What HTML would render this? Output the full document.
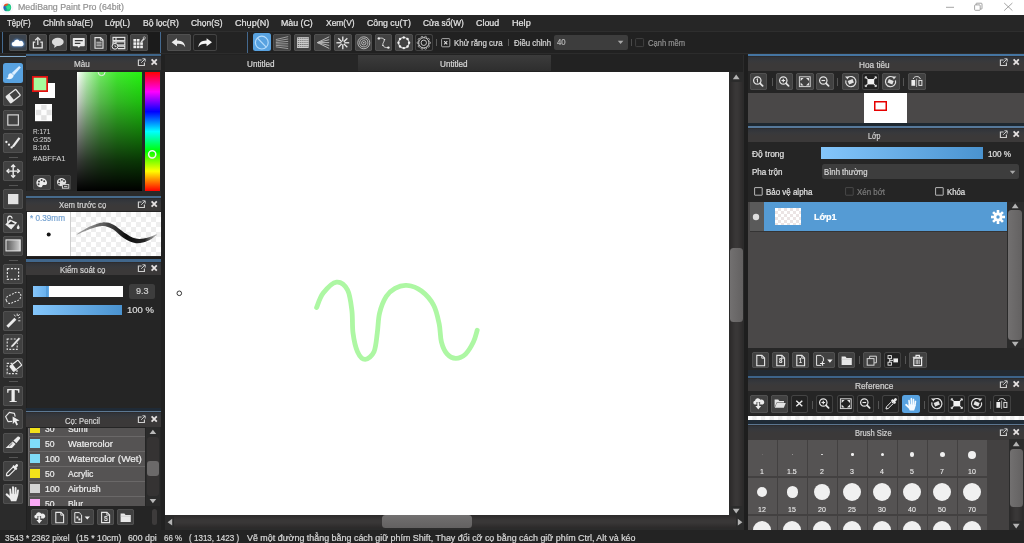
<!DOCTYPE html>
<html lang="vi"><head><meta charset="utf-8"><title>MediBang Paint Pro (64bit)</title>
<style>
html,body{margin:0;padding:0}
body{width:1024px;height:543px;overflow:hidden;background:#2b2b2b;position:relative;font-family:"Liberation Sans", sans-serif;}
div,span,svg{position:absolute;}
.t{white-space:nowrap;transform-origin:0 0;-webkit-text-stroke:0.22px currentColor;}
</style></head>
<body>
<div style="left:0px;top:0px;width:1024px;height:15px;background:#ffffff;"></div>
<svg style="left:1px;top:0.5px;" width="13" height="13" viewBox="0 0 13 13"><defs><filter id="lb" x="-20%" y="-20%" width="140%" height="140%"><feGaussianBlur stdDeviation="0.45"/></filter><clipPath id="lc"><circle cx="6.3" cy="6.4" r="3.9"/></clipPath></defs><circle cx="6.3" cy="6.4" r="5.6" fill="none" stroke="#f3e6f6" stroke-width="0.8" opacity="0.8"/><g clip-path="url(#lc)"><g filter="url(#lb)"><rect x="1" y="1" width="11" height="11" fill="#22c486"/><path d="M1 6L6 6.5L5 12H1z" fill="#1a8fa0"/><path d="M1 3.5L4.6 4.4L4.4 8L1 8z" fill="#2b5cc4"/><path d="M2 1H8L6.6 4.2L3.6 5.2L2 4z" fill="#e4542c"/><circle cx="7.4" cy="6.6" r="2" fill="#2be090"/></g></g></svg>
<span class="t" style="transform:scaleX(0.9809);left:18.00px;top:2.98px;font-size:9px;line-height:9px;color:#929292;">MediBang Paint Pro (64bit)</span>
<svg style="left:940px;top:0px;" width="84" height="15" viewBox="0 0 84 15"><g stroke="#868686" stroke-width="0.75" fill="none"><path d="M6 7.3H14"/><rect x="34.6" y="4.9" width="5.6" height="5.4" rx="0.8"/><path d="M36.1 4.9V3.8a0.6 0.6 0 0 1 .6-.6H41.2a.8 .8 0 0 1 .8 .8V8.4a.6 .6 0 0 1-.6 .6H40.2"/><path d="M64.2 3L72.4 10.6M72.4 3L64.2 10.6"/></g></svg>
<div style="left:0px;top:15px;width:1024px;height:16.4px;background:#262626;"></div>
<span class="t" style="transform:scaleX(0.9115);left:7.00px;top:19.12px;font-size:8.6px;line-height:8.6px;color:#e4e4e4;">Tệp(F)</span>
<span class="t" style="transform:scaleX(0.9777);left:43.00px;top:19.12px;font-size:8.6px;line-height:8.6px;color:#e4e4e4;">Chỉnh sửa(E)</span>
<span class="t" style="transform:scaleX(0.9726);left:105.00px;top:19.12px;font-size:8.6px;line-height:8.6px;color:#e4e4e4;">Lớp(L)</span>
<span class="t" style="transform:scaleX(0.9992);left:142.50px;top:19.12px;font-size:8.6px;line-height:8.6px;color:#e4e4e4;">Bộ lọc(R)</span>
<span class="t" style="transform:scaleX(0.9844);left:190.50px;top:19.12px;font-size:8.6px;line-height:8.6px;color:#e4e4e4;">Chọn(S)</span>
<span class="t" style="transform:scaleX(1.0559);left:234.50px;top:19.12px;font-size:8.6px;line-height:8.6px;color:#e4e4e4;">Chụp(N)</span>
<span class="t" style="transform:scaleX(1.0243);left:281.20px;top:19.12px;font-size:8.6px;line-height:8.6px;color:#e4e4e4;">Màu (C)</span>
<span class="t" style="transform:scaleX(0.9814);left:325.70px;top:19.12px;font-size:8.6px;line-height:8.6px;color:#e4e4e4;">Xem(V)</span>
<span class="t" style="transform:scaleX(1.0190);left:366.70px;top:19.12px;font-size:8.6px;line-height:8.6px;color:#e4e4e4;">Công cụ(T)</span>
<span class="t" style="transform:scaleX(0.9703);left:423.00px;top:19.12px;font-size:8.6px;line-height:8.6px;color:#e4e4e4;">Cửa sổ(W)</span>
<span class="t" style="transform:scaleX(1.0325);left:476.20px;top:19.12px;font-size:8.6px;line-height:8.6px;color:#e4e4e4;">Cloud</span>
<span class="t" style="transform:scaleX(1.0572);left:511.90px;top:19.12px;font-size:8.6px;line-height:8.6px;color:#e4e4e4;">Help</span>
<div style="left:0px;top:31.2px;width:1024px;height:22.4px;background:#212121;"></div>
<div style="left:0px;top:31.4px;width:160px;height:22px;background:#1b1b1b;"></div>
<div style="left:160px;top:31.4px;width:86.5px;height:22px;background:#232323;"></div>
<div style="left:0px;top:31.2px;width:1024px;height:0.8px;background:#2e2e2e;"></div>
<div style="left:0px;top:53.2px;width:1024px;height:0.8px;background:#2c2c2c;"></div>
<div style="left:0px;top:54px;width:1024px;height:1.2px;background:#222;"></div>
<div style="left:2px;top:32px;width:1.4px;height:20.6px;background:#44698f;"></div>
<div style="left:160px;top:32px;width:1.4px;height:20.6px;background:#44698f;"></div>
<div style="left:246.5px;top:32px;width:1.4px;height:20.6px;background:#44698f;"></div>
<div style="left:9px;top:33.5px;width:17.6px;height:17.6px;background:#3c444e;border-radius:2.5px;box-shadow:inset 0 0 0 0.7px #565656"></div>
<svg style="left:9px;top:33.5px;" width="17.6" height="17.6" viewBox="0 0 17.6 17.6"><defs><filter id="gl" x="-30%" y="-30%" width="160%" height="160%"><feGaussianBlur stdDeviation="1.1"/></filter></defs><path d="M4.5 12.6a2.3 2.3 0 0 1 .2-4.6a3.2 3.2 0 0 1 6-1a2.9 2.9 0 0 1 2.6 5.6z" fill="#5b9df0" filter="url(#gl)"/><path d="M4.7 12.3a2.1 2.1 0 0 1 .3-4.2a3 3 0 0 1 5.6-.9a2.6 2.6 0 0 1 2.2 5.1z" fill="#ffffff"/></svg>
<div style="left:29.2px;top:33.5px;width:17.6px;height:17.6px;background:#424242;border-radius:2.5px;box-shadow:inset 0 0 0 0.7px #565656"></div>
<svg style="left:29.2px;top:33.5px;" width="17.6" height="17.6" viewBox="0 0 17.6 17.6"><g fill="none" stroke="#e6e6e6" stroke-width="1.3"><path d="M6.3 8.2H4.4V13.8H13.2V8.2H11.3"/><path d="M8.8 11V4.2"/><path d="M6.2 6.3L8.8 3.6L11.4 6.3" stroke-linejoin="miter"/></g></svg>
<div style="left:49.4px;top:33.5px;width:17.6px;height:17.6px;background:#424242;border-radius:2.5px;box-shadow:inset 0 0 0 0.7px #565656"></div>
<svg style="left:49.4px;top:33.5px;" width="17.6" height="17.6" viewBox="0 0 17.6 17.6"><ellipse cx="8.8" cy="7.9" rx="5.9" ry="4.2" fill="#dcdcdc"/><path d="M5.6 10.5L5.2 13.9L8.6 11.6z" fill="#dcdcdc"/></svg>
<div style="left:69.6px;top:33.5px;width:17.6px;height:17.6px;background:#424242;border-radius:2.5px;box-shadow:inset 0 0 0 0.7px #565656"></div>
<svg style="left:69.6px;top:33.5px;" width="17.6" height="17.6" viewBox="0 0 17.6 17.6"><path d="M3.6 4H14a0.8 .8 0 0 1 .8 .8V11.4a.8 .8 0 0 1-.8 .8H10.2L8.8 13.8L7.4 12.2H3.6a.8 .8 0 0 1-.8-.8V4.8a.8 .8 0 0 1 .8-.8z" fill="#ececec"/><path d="M4.8 6.7H12.8M4.8 9.3H10.4" stroke="#3a3a3a" stroke-width="1.2"/></svg>
<div style="left:89.8px;top:33.5px;width:17.6px;height:17.6px;background:#424242;border-radius:2.5px;box-shadow:inset 0 0 0 0.7px #565656"></div>
<svg style="left:89.8px;top:33.5px;" width="17.6" height="17.6" viewBox="0 0 17.6 17.6"><path d="M5 3.6H10.6L13 6V14.2H5z" fill="none" stroke="#e6e6e6" stroke-width="1.1"/><path d="M10.4 3.8V6.2H12.8" fill="none" stroke="#e6e6e6" stroke-width="0.9"/><path d="M6.4 8.2H11.6M6.4 10H11.6M6.4 11.8H11.6" stroke="#c9c9c9" stroke-width="1.1"/></svg>
<div style="left:110px;top:33.5px;width:17.6px;height:17.6px;background:#424242;border-radius:2.5px;box-shadow:inset 0 0 0 0.7px #565656"></div>
<svg style="left:110px;top:33.5px;" width="17.6" height="17.6" viewBox="0 0 17.6 17.6"><g fill="none" stroke="#e6e6e6" stroke-width="1.15"><rect x="3" y="3.4" width="11.8" height="3.2"/><rect x="3" y="7.8" width="11.8" height="3.2"/><path d="M8 12.2H14.8V14.6H8"/><path d="M6 3.4V6.6M6 7.8V9"/></g><circle cx="5" cy="12.3" r="2.9" fill="#3e3e3e" stroke="#e6e6e6" stroke-width="1"/><path d="M5 10.8V12.5H6.4" stroke="#e6e6e6" stroke-width="0.8" fill="none"/></svg>
<div style="left:130.2px;top:33.5px;width:17.6px;height:17.6px;background:#424242;border-radius:2.5px;box-shadow:inset 0 0 0 0.7px #565656"></div>
<svg style="left:130.2px;top:33.5px;" width="17.6" height="17.6" viewBox="0 0 17.6 17.6"><rect x="3.4" y="5.0" width="2.7" height="2.6" fill="#ededed"/><rect x="6.8" y="5.0" width="2.7" height="2.6" fill="#ededed"/><rect x="3.4" y="8.3" width="2.7" height="2.6" fill="#ededed"/><rect x="6.8" y="8.3" width="2.7" height="2.6" fill="#ededed"/><rect x="10.2" y="8.3" width="2.7" height="2.6" fill="#ededed"/><rect x="3.4" y="11.6" width="2.7" height="2.6" fill="#ededed"/><rect x="6.8" y="11.6" width="2.7" height="2.6" fill="#ededed"/><rect x="10.2" y="11.6" width="2.7" height="2.6" fill="#ededed"/><path d="M10.6 7.6L13.4 4.2L14.6 5.2L11.8 8.6z" fill="#d8d8d8"/><circle cx="14.3" cy="3.9" r="1.1" fill="none" stroke="#d0d0d0" stroke-width="0.7"/></svg>
<div style="left:167px;top:33.5px;width:23.6px;height:17.6px;background:#424242;border-radius:2.5px;box-shadow:inset 0 0 0 0.7px #565656"></div>
<svg style="left:167px;top:33.5px;" width="23.6" height="17.6" viewBox="0 0 23.6 17.6"><path d="M4.6 8.2L10 4.2V6.6C15 6.4 18 9.2 18.2 13.2C16.6 10.6 14 9.6 10 9.9V12.2z" fill="#ececec"/></svg>
<div style="left:193px;top:33.5px;width:23.6px;height:17.6px;background:#222;border-radius:2.5px;box-shadow:inset 0 0 0 0.9px #444"></div>
<svg style="left:193px;top:33.5px;" width="23.6" height="17.6" viewBox="0 0 23.6 17.6"><path d="M19 8.2L13.6 4.2V6.6C8.6 6.4 5.6 9.2 5.4 13.2C7 10.6 9.6 9.6 13.6 9.9V12.2z" fill="#f4f4f4"/></svg>
<div style="left:253px;top:33px;width:17.6px;height:18px;background:#58a2e0;border-radius:2.5px"></div>
<svg style="left:253px;top:33.5px;" width="17.6" height="17.6" viewBox="0 0 17.6 17.6"><g fill="none" stroke="#b4dbfb" stroke-width="1.2"><circle cx="8.8" cy="8.6" r="6.4"/><path d="M4.4 4L13.2 13.2"/></g></svg>
<div style="left:273.3px;top:33.5px;width:17.6px;height:17.6px;background:#424242;border-radius:2.5px;box-shadow:inset 0 0 0 0.7px #565656"></div>
<svg style="left:273.3px;top:33.5px;" width="17.6" height="17.6" viewBox="0 0 17.6 17.6"><g stroke="#ababab" stroke-width="0.85"><path d="M2.8 5.60L15.2 2.60" /><path d="M2.8 7.05L15.2 5.00" /><path d="M2.8 8.50L15.2 7.40" /><path d="M2.8 9.95L15.2 9.80" /><path d="M2.8 11.40L15.2 12.20" /><path d="M2.8 12.85L15.2 14.60" /></g></svg>
<div style="left:293.6px;top:33.5px;width:17.6px;height:17.6px;background:#424242;border-radius:2.5px;box-shadow:inset 0 0 0 0.7px #565656"></div>
<svg style="left:293.6px;top:33.5px;" width="17.6" height="17.6" viewBox="0 0 17.6 17.6"><g stroke="#cacaca" stroke-width="1.1"><path d="M3.70 3.2V13.9M3.2 3.70H14.6"/><path d="M5.78 3.2V13.9M3.2 5.64H14.6"/><path d="M7.86 3.2V13.9M3.2 7.58H14.6"/><path d="M9.94 3.2V13.9M3.2 9.52H14.6"/><path d="M12.02 3.2V13.9M3.2 11.46H14.6"/><path d="M14.10 3.2V13.9M3.2 13.40H14.6"/></g></svg>
<div style="left:313.9px;top:33.5px;width:17.6px;height:17.6px;background:#424242;border-radius:2.5px;box-shadow:inset 0 0 0 0.7px #565656"></div>
<svg style="left:313.9px;top:33.5px;" width="17.6" height="17.6" viewBox="0 0 17.6 17.6"><g stroke="#bdbdbd" stroke-width="0.95"><path d="M3.4 8.6L15.2 2.80"/><path d="M3.4 8.6L15.2 5.70"/><path d="M3.4 8.6L15.2 8.60"/><path d="M3.4 8.6L15.2 11.50"/><path d="M3.4 8.6L15.2 14.40"/></g></svg>
<div style="left:334.2px;top:33.5px;width:17.6px;height:17.6px;background:#424242;border-radius:2.5px;box-shadow:inset 0 0 0 0.7px #565656"></div>
<svg style="left:334.2px;top:33.5px;" width="17.6" height="17.6" viewBox="0 0 17.6 17.6"><g stroke="#ebebeb" stroke-width="1.3"><path d="M10.30 8.80L15.20 8.80"/><path d="M9.86 9.86L13.33 13.33"/><path d="M8.80 10.30L8.80 15.20"/><path d="M7.74 9.86L4.27 13.33"/><path d="M7.30 8.80L2.40 8.80"/><path d="M7.74 7.74L4.27 4.27"/><path d="M8.80 7.30L8.80 2.40"/><path d="M9.86 7.74L13.33 4.27"/></g></svg>
<div style="left:354.5px;top:33.5px;width:17.6px;height:17.6px;background:#424242;border-radius:2.5px;box-shadow:inset 0 0 0 0.7px #565656"></div>
<svg style="left:354.5px;top:33.5px;" width="17.6" height="17.6" viewBox="0 0 17.6 17.6"><g fill="none" stroke="#d2d2d2" stroke-width="0.8"><circle cx="8.8" cy="8.8" r="6"/><circle cx="8.8" cy="8.8" r="4.1"/><circle cx="8.8" cy="8.8" r="2.2"/></g><circle cx="8.8" cy="8.8" r="0.8" fill="#d2d2d2"/></svg>
<div style="left:374.8px;top:33.5px;width:17.6px;height:17.6px;background:#424242;border-radius:2.5px;box-shadow:inset 0 0 0 0.7px #565656"></div>
<svg style="left:374.8px;top:33.5px;" width="17.6" height="17.6" viewBox="0 0 17.6 17.6"><path d="M3.8 4.4C8 3.4 10.6 5 8.6 8.2C6.6 11.4 8.6 14 13.4 13.6" fill="none" stroke="#d4d4d4" stroke-width="1"/><g fill="#f0f0f0"><circle cx="3.8" cy="4.4" r="1.2"/><circle cx="13.4" cy="13.6" r="1.2"/><circle cx="9.6" cy="5.6" r="0.7"/><circle cx="7.9" cy="11.4" r="0.7"/></g></svg>
<div style="left:395.1px;top:33.5px;width:17.6px;height:17.6px;background:#424242;border-radius:2.5px;box-shadow:inset 0 0 0 0.7px #565656"></div>
<svg style="left:395.1px;top:33.5px;" width="17.6" height="17.6" viewBox="0 0 17.6 17.6"><circle cx="8.8" cy="8.8" r="5.3" fill="none" stroke="#dadada" stroke-width="1.1"/><circle cx="14.10" cy="8.80" r="1.2" fill="#f2f2f2"/><circle cx="12.55" cy="12.55" r="1.2" fill="#f2f2f2"/><circle cx="8.80" cy="14.10" r="1.2" fill="#f2f2f2"/><circle cx="5.05" cy="12.55" r="1.2" fill="#f2f2f2"/><circle cx="3.50" cy="8.80" r="1.2" fill="#f2f2f2"/><circle cx="5.05" cy="5.05" r="1.2" fill="#f2f2f2"/><circle cx="8.80" cy="3.50" r="1.2" fill="#f2f2f2"/><circle cx="12.55" cy="5.05" r="1.2" fill="#f2f2f2"/></svg>
<div style="left:415.4px;top:33.5px;width:17.6px;height:17.6px;background:#222;border-radius:2.5px;box-shadow:inset 0 0 0 0.9px #444"></div>
<svg style="left:415.4px;top:33.5px;" width="17.6" height="17.6" viewBox="0 0 17.6 17.6"><circle cx="14.40" cy="8.80" r="1.1" fill="none" stroke="#cfcfcf" stroke-width="0.7"/><circle cx="13.33" cy="12.09" r="1.1" fill="none" stroke="#cfcfcf" stroke-width="0.7"/><circle cx="10.53" cy="14.13" r="1.1" fill="none" stroke="#cfcfcf" stroke-width="0.7"/><circle cx="7.07" cy="14.13" r="1.1" fill="none" stroke="#cfcfcf" stroke-width="0.7"/><circle cx="4.27" cy="12.09" r="1.1" fill="none" stroke="#cfcfcf" stroke-width="0.7"/><circle cx="3.20" cy="8.80" r="1.1" fill="none" stroke="#cfcfcf" stroke-width="0.7"/><circle cx="4.27" cy="5.51" r="1.1" fill="none" stroke="#cfcfcf" stroke-width="0.7"/><circle cx="7.07" cy="3.47" r="1.1" fill="none" stroke="#cfcfcf" stroke-width="0.7"/><circle cx="10.53" cy="3.47" r="1.1" fill="none" stroke="#cfcfcf" stroke-width="0.7"/><circle cx="13.33" cy="5.51" r="1.1" fill="none" stroke="#cfcfcf" stroke-width="0.7"/><circle cx="8.8" cy="8.8" r="5.1" fill="#222" stroke="#d6d6d6" stroke-width="0.9"/><circle cx="8.8" cy="8.8" r="2.7" fill="none" stroke="#d6d6d6" stroke-width="0.9"/></svg>
<div style="left:436px;top:38.5px;width:0.8px;height:7px;background:#5a5a5a;"></div>
<svg style="left:441px;top:37.7px;" width="10" height="10" viewBox="0 0 10 10"><rect x="0.6" y="0.6" width="8.2" height="8.2" rx="0.8" fill="none" stroke="#bdbdbd" stroke-width="0.85"/><path d="M3.1 3.1L6.3 6.3M6.3 3.1L3.1 6.3" stroke="#dcdcdc" stroke-width="1.1"/></svg>
<span class="t" style="transform:scaleX(0.9175);left:453.80px;top:38.92px;font-size:8.6px;line-height:8.6px;color:#d6d6d6;">Khử răng cưa</span>
<div style="left:508px;top:38.5px;width:0.8px;height:7px;background:#5a5a5a;"></div>
<span class="t" style="transform:scaleX(0.9136);left:513.50px;top:38.92px;font-size:8.6px;line-height:8.6px;color:#d6d6d6;">Điều chỉnh</span>
<div style="left:554px;top:35px;width:73.5px;height:14.5px;background:#3d3d3d;border-radius:2px"></div>
<span class="t" style="transform:scaleX(0.9441);left:556.50px;top:38.96px;font-size:8.2px;line-height:8.2px;color:#b8b8b8;">40</span>
<svg style="left:617px;top:40px;" width="8" height="5" viewBox="0 0 8 5"><path d="M0.8 0.8H6.4L3.6 4z" fill="#a8a8a8"/></svg>
<div style="left:630.5px;top:38.5px;width:0.8px;height:7px;background:#4a4a4a;"></div>
<svg style="left:634.5px;top:37.5px;" width="10" height="10" viewBox="0 0 10 10"><rect x="0.6" y="0.6" width="8" height="8" rx="0.8" fill="none" stroke="#424242" stroke-width="1"/></svg>
<span class="t" style="transform:scaleX(0.8803);left:647.80px;top:38.92px;font-size:8.6px;line-height:8.6px;color:#8e8e8e;">Cạnh mềm</span>
<div style="left:0px;top:55px;width:26px;height:475px;background:#2b2b2b;"></div>
<div style="left:0px;top:56px;width:25.5px;height:1px;background:#7fa6c8;"></div>
<div style="left:3px;top:62.7px;width:20.4px;height:20.2px;background:#58a2e0;border-radius:2.5px"></div>
<svg style="left:3px;top:62.7px;" width="20.4" height="20.2" viewBox="0 0 20.4 20.2"><path d="M8.8 10L16.2 3L17.8 4.6L11 12.2z" fill="#dbeeff"/><path d="M8.6 10.4C6.2 9.8 5 11.8 5.2 13.4C5.3 14.6 4 15.2 3 14.8C4.4 17 9.6 17 10.8 12.4z" fill="#eaf5ff"/></svg>
<div style="left:3px;top:86.2px;width:20.4px;height:20.2px;background:#414141;border-radius:2.5px;box-shadow:inset 0 0 0 0.7px #565656"></div>
<svg style="left:3px;top:86.2px;" width="20.4" height="20.2" viewBox="0 0 20.4 20.2"><g transform="rotate(-38 10.2 10.1)"><rect x="4" y="6.2" width="12.4" height="7.8" rx="0.8" fill="none" stroke="#e8e8e8" stroke-width="1.3"/><rect x="4" y="6.2" width="4.4" height="7.8" fill="#e8e8e8"/></g></svg>
<div style="left:3px;top:109.6px;width:20.4px;height:20.2px;background:#414141;border-radius:2.5px;box-shadow:inset 0 0 0 0.7px #565656"></div>
<svg style="left:3px;top:109.6px;" width="20.4" height="20.2" viewBox="0 0 20.4 20.2"><rect x="4.8" y="4.9" width="10.6" height="10.2" fill="none" stroke="#d6d6d6" stroke-width="1.2"/></svg>
<div style="left:3px;top:133.1px;width:20.4px;height:20.2px;background:#414141;border-radius:2.5px;box-shadow:inset 0 0 0 0.7px #565656"></div>
<svg style="left:3px;top:133.1px;" width="20.4" height="20.2" viewBox="0 0 20.4 20.2"><g fill="#ececec"><circle cx="3.4" cy="9" r="1.15"/><circle cx="6" cy="11.7" r="1.15"/><circle cx="8.6" cy="14.4" r="1.15"/></g><path d="M9.4 12.4L15.6 4.2L17.4 5.6L11.2 13.8L9 14.6z" fill="#ececec"/></svg>
<div style="left:3px;top:161.0px;width:20.4px;height:20.2px;background:#414141;border-radius:2.5px;box-shadow:inset 0 0 0 0.7px #565656"></div>
<svg style="left:3px;top:161.0px;" width="20.4" height="20.2" viewBox="0 0 20.4 20.2"><g stroke="#ececec" stroke-width="1.4" fill="none"><path d="M10.2 4.2V16M4.2 10.1H16.2"/><path d="M8.2 6L10.2 3.9L12.2 6M8.2 14.2L10.2 16.3L12.2 14.2M6.1 8.1L4 10.1L6.1 12.1M14.3 8.1L16.4 10.1L14.3 12.1"/></g></svg>
<div style="left:3px;top:189.2px;width:20.4px;height:20.2px;background:#414141;border-radius:2.5px;box-shadow:inset 0 0 0 0.7px #565656"></div>
<svg style="left:3px;top:189.2px;" width="20.4" height="20.2" viewBox="0 0 20.4 20.2"><rect x="5" y="5" width="10.4" height="10.2" fill="#e2e2e2"/></svg>
<div style="left:3px;top:212.7px;width:20.4px;height:20.2px;background:#414141;border-radius:2.5px;box-shadow:inset 0 0 0 0.7px #565656"></div>
<svg style="left:3px;top:212.7px;" width="20.4" height="20.2" viewBox="0 0 20.4 20.2"><path d="M6.9 6.6L14.1 9.6L8.2 16.4L2.3 11.6z" fill="#ececec"/><path d="M5 11.3L8.1 8.2L12.4 11.3z" fill="#333"/><path d="M4.7 9.6V6C4.6 2.4 8.6 2 9.2 5.6" fill="none" stroke="#ececec" stroke-width="1.1"/><path d="M15.1 11.2C16.6 13.4 16.9 14.6 16.4 15.5C15.8 16.5 14 16.3 13.8 15.1C13.7 14.1 14.7 12.8 15.1 11.2z" fill="#ececec"/></svg>
<div style="left:3px;top:236.1px;width:20.4px;height:20.2px;background:#414141;border-radius:2.5px;box-shadow:inset 0 0 0 0.7px #565656"></div>
<svg style="left:3px;top:236.1px;" width="20.4" height="20.2" viewBox="0 0 20.4 20.2"><defs><linearGradient id="gg" x1="0" x2="1"><stop offset="0" stop-color="#555"/><stop offset="1" stop-color="#cfcfcf"/></linearGradient></defs><rect x="3" y="3.9" width="14.2" height="11" fill="url(#gg)" stroke="#e4e4e4" stroke-width="1.1"/></svg>
<div style="left:3px;top:264.2px;width:20.4px;height:20.2px;background:#414141;border-radius:2.5px;box-shadow:inset 0 0 0 0.7px #565656"></div>
<svg style="left:3px;top:264.2px;" width="20.4" height="20.2" viewBox="0 0 20.4 20.2"><rect x="4.4" y="4.6" width="11.2" height="10.8" fill="none" stroke="#e0e0e0" stroke-width="1.2" stroke-dasharray="2 1.5"/></svg>
<div style="left:3px;top:287.5px;width:20.4px;height:20.2px;background:#414141;border-radius:2.5px;box-shadow:inset 0 0 0 0.7px #565656"></div>
<svg style="left:3px;top:287.5px;" width="20.4" height="20.2" viewBox="0 0 20.4 20.2"><path d="M3.4 12.6C2 9.6 4.8 7.8 7.6 7C10.4 6.2 11.6 3.8 14.8 4.2C18.4 4.8 18.8 9 16.2 11.6C13.6 14 11.4 13 9.4 14.6C7.4 16.2 4.6 15.6 3.4 12.6z" fill="none" stroke="#dcdcdc" stroke-width="1.1" stroke-dasharray="1.9 1.3"/></svg>
<div style="left:3px;top:310.9px;width:20.4px;height:20.2px;background:#414141;border-radius:2.5px;box-shadow:inset 0 0 0 0.7px #565656"></div>
<svg style="left:3px;top:310.9px;" width="20.4" height="20.2" viewBox="0 0 20.4 20.2"><path d="M3.4 14.8L11.4 6.8L13.4 8.8L5.4 16.8z" fill="#ececec"/><g stroke="#ececec" stroke-width="0.9"><path d="M14.2 2.6V5M17.4 6.2L15.4 7M17.4 9.8H15.2M11.2 3.6L12.4 5.4M16.6 3.2L15.2 5"/></g></svg>
<div style="left:3px;top:334.3px;width:20.4px;height:20.2px;background:#414141;border-radius:2.5px;box-shadow:inset 0 0 0 0.7px #565656"></div>
<svg style="left:3px;top:334.3px;" width="20.4" height="20.2" viewBox="0 0 20.4 20.2"><rect x="4.2" y="5" width="10" height="10.4" fill="none" stroke="#e0e0e0" stroke-width="1.1" stroke-dasharray="1.9 1.4"/><path d="M8.2 11.4L15.8 3.2L17.6 4.8L10 13L7.6 13.8z" fill="#ececec" stroke="#3d3d3d" stroke-width="0.7"/></svg>
<div style="left:3px;top:357.7px;width:20.4px;height:20.2px;background:#414141;border-radius:2.5px;box-shadow:inset 0 0 0 0.7px #565656"></div>
<svg style="left:3px;top:357.7px;" width="20.4" height="20.2" viewBox="0 0 20.4 20.2"><rect x="4.2" y="5.4" width="9.8" height="10.2" fill="none" stroke="#e0e0e0" stroke-width="1.1" stroke-dasharray="1.9 1.4"/><g transform="rotate(-38 12.8 7.8)"><rect x="7.6" y="4.6" width="10.4" height="6.4" rx="0.7" fill="#3d3d3d" stroke="#ececec" stroke-width="1.1"/><rect x="7.6" y="4.6" width="3.6" height="6.4" fill="#ececec"/></g></svg>
<div style="left:3px;top:385.8px;width:20.4px;height:20.2px;background:#414141;border-radius:2.5px;box-shadow:inset 0 0 0 0.7px #565656"></div>
<span class="t" style="transform:scaleX(1.0320);left:7.00px;top:386.76px;font-size:18px;line-height:18px;color:#ececec;font-weight:bold;font-family:'Liberation Serif',serif;">T</span>
<div style="left:3px;top:409.2px;width:20.4px;height:20.2px;background:#414141;border-radius:2.5px;box-shadow:inset 0 0 0 0.7px #565656"></div>
<svg style="left:3px;top:409.2px;" width="20.4" height="20.2" viewBox="0 0 20.4 20.2"><path d="M9.2 12.4L5 12.6L2.6 7.6L6.4 3.4L11.4 4.4L12.2 7.6" fill="none" stroke="#e4e4e4" stroke-width="1.2" stroke-linejoin="round"/><path d="M9.6 7.6L16.6 11.6L13.4 12.2L15 15.6L13.4 16.4L11.8 13L9.8 15z" fill="#ececec"/></svg>
<div style="left:3px;top:432.6px;width:20.4px;height:20.2px;background:#414141;border-radius:2.5px;box-shadow:inset 0 0 0 0.7px #565656"></div>
<svg style="left:3px;top:432.6px;" width="20.4" height="20.2" viewBox="0 0 20.4 20.2"><path d="M2.6 15L9.6 8.4L12.6 11L9 15z" fill="#ececec"/><path d="M10.4 7.6L14.8 3.6C15.8 2.8 17.8 4.6 17 5.8L13.4 10.2z" fill="#ececec"/><path d="M6 13.4L9.4 10.2" stroke="#3d3d3d" stroke-width="0.8"/></svg>
<div style="left:3px;top:461.0px;width:20.4px;height:20.2px;background:#414141;border-radius:2.5px;box-shadow:inset 0 0 0 0.7px #565656"></div>
<svg style="left:3px;top:461.0px;" width="20.4" height="20.2" viewBox="0 0 20.4 20.2"><path d="M3.4 14.4L3.9 12.2L10.2 5.9L12.4 8.1L6.1 14.4L3.9 14.9z" fill="#3c3c3c" stroke="#ececec" stroke-width="1.2" stroke-linejoin="round"/><path d="M9.4 5.2L10.6 4L11.6 5L13 3.4C14 2.4 15.8 4 14.8 5.2L13.4 6.8L14.4 7.8L13.2 9z" fill="#ececec"/></svg>
<div style="left:3px;top:484.3px;width:20.4px;height:20.2px;background:#414141;border-radius:2.5px;box-shadow:inset 0 0 0 0.7px #565656"></div>
<svg style="left:3px;top:484.3px;" width="20.4" height="20.2" viewBox="0 0 20.4 20.2"><g stroke="#ececec" stroke-linecap="round" fill="none"><path d="M7.2 5.4L7.8 11M10 3.1L10.2 10.5M12.6 4L12.4 10.5M15 6.4L14.3 11.5" stroke-width="1.9"/><path d="M3.7 10.4L7.6 14" stroke-width="2.1"/></g><path d="M6.7 9.6L15 10.6C15 13.6 13.9 15.6 13.3 17.3H8.1C7 15.6 6.5 13.4 6.7 9.6z" fill="#ececec"/></svg>
<div style="left:9px;top:156.6px;width:8.5px;height:1px;background:#555;"></div>
<div style="left:9px;top:184.8px;width:8.5px;height:1px;background:#555;"></div>
<div style="left:9px;top:259.6px;width:8.5px;height:1px;background:#555;"></div>
<div style="left:9px;top:381.4px;width:8.5px;height:1px;background:#555;"></div>
<div style="left:9px;top:456.5px;width:8.5px;height:1px;background:#555;"></div>
<div style="left:26px;top:55px;width:135px;height:475px;background:#252525;"></div>
<div style="left:26px;top:53.8px;width:135px;height:2.0px;background:#3f6589;"></div>
<div style="left:26px;top:55.8px;width:135px;height:13.900000000000006px;background:#3b3939;background:linear-gradient(#2c2826 0,#31343a 1.4px,#38393c 5px,#3b3939 8px)"></div>
<span class="t" style="transform:scaleX(0.9450);left:74.00px;top:60.02px;font-size:8.6px;line-height:8.6px;color:#d2d2d2;">Màu</span>
<svg style="left:137.4px;top:58.099999999999994px;" width="22" height="9" viewBox="0 0 22 9"><g fill="none" stroke="#cfcfcf"><path d="M4.6 2H1.4V7.5H7.4V4.6" stroke-width="1.15"/><path d="M4.2 4.8L8 1M5.4 0.8H8.2V3.6" stroke-width="0.95"/><path d="M14.6 1.4L19.8 6.6M19.8 1.4L14.6 6.6" stroke="#e6e2e2" stroke-width="1.8"/></g></svg>
<div style="left:27px;top:70.2px;width:134px;height:124.5px;background:#252525;"></div>
<div style="left:39px;top:82.9px;width:15.5px;height:15.5px;background:#ffffff;"></div>
<div style="left:32px;top:76px;width:16px;height:16px;background:#a6fb9c;box-shadow:inset 0 0 0 1.7px #e41010"></div>
<svg style="left:34.8px;top:104.4px;" width="17.6" height="17.2" viewBox="0 0 17.6 17.2"><rect width="17.6" height="17.2" fill="#fdfdfd"/><g fill="#e2e2e2"><rect x="6.2" y="1" width="5.4" height="4.8"/><rect x="1" y="5.8" width="5.2" height="5.4"/><rect x="11.6" y="5.8" width="5" height="5.4"/><rect x="6.2" y="11.2" width="5.4" height="5"/></g></svg>
<span class="t" style="transform:scaleX(0.9016);left:32.50px;top:127.51px;font-size:7.2px;line-height:7.2px;color:#d0d0d0;-webkit-text-stroke:0.08px currentColor;">R:171</span>
<span class="t" style="transform:scaleX(0.9187);left:32.50px;top:135.91px;font-size:7.2px;line-height:7.2px;color:#d0d0d0;-webkit-text-stroke:0.08px currentColor;">G:255</span>
<span class="t" style="transform:scaleX(0.9204);left:32.50px;top:144.31px;font-size:7.2px;line-height:7.2px;color:#d0d0d0;-webkit-text-stroke:0.08px currentColor;">B:161</span>
<span class="t" style="transform:scaleX(0.9969);left:32.50px;top:155.27px;font-size:7.6px;line-height:7.6px;color:#d0d0d0;-webkit-text-stroke:0.08px currentColor;">#ABFFA1</span>
<div style="left:33.4px;top:174.6px;width:17.6px;height:15.2px;background:#414141;border-radius:2.5px;box-shadow:inset 0 0 0 0.7px #565656"></div>
<svg style="left:33.4px;top:174.6px;" width="17.6" height="15.2" viewBox="0 0 17.6 15.2"><path d="M8.8 3C5.2 3 3.2 5.6 3.4 8.2C3.6 11 6.2 12.6 8.2 12.2C9.4 12 9 10.8 9.8 10.2C10.8 9.6 12.4 10.6 13.6 9.4C15.2 7.6 12.8 3 8.8 3z" fill="#ececec"/><g fill="#3d3d3d"><circle cx="6" cy="6.4" r="1"/><circle cx="8.6" cy="5" r="1"/><circle cx="11.2" cy="6.2" r="1"/><circle cx="5.6" cy="9.2" r="1"/></g></svg>
<div style="left:54.2px;top:174.6px;width:17.3px;height:15.2px;background:#363636;border-radius:2.5px;box-shadow:inset 0 0 0 0.6px #484848"></div>
<svg style="left:54.2px;top:174.6px;" width="17.3" height="15.2" viewBox="0 0 17.3 15.2"><path d="M7.8 3C4.6 3 2.8 5.2 3 7.6C3.2 10 5.4 11.4 7.2 11.2C8.2 11 7.9 10 8.6 9.4C9.4 8.8 10.8 9.6 11.8 8.6C13.2 7 11.2 3 7.8 3z" fill="#e0e0e0"/><g fill="#363636"><circle cx="5.4" cy="6" r="0.9"/><circle cx="7.8" cy="4.8" r="0.9"/><circle cx="10" cy="6" r="0.9"/><circle cx="5" cy="8.6" r="0.9"/></g><rect x="8.4" y="9.6" width="6.4" height="3.6" fill="#363636" stroke="#e0e0e0" stroke-width="0.9"/><path d="M10 11.4H13.4" stroke="#e0e0e0" stroke-width="0.9"/></svg>
<div style="left:77.2px;top:72px;width:64.8px;height:119px;background:#2aff12;background:linear-gradient(to bottom,rgba(0,0,0,0) 0%,rgba(0,0,0,0.22) 25%,rgba(0,0,0,0.5) 50%,rgba(0,0,0,0.78) 75%,#000 100%),linear-gradient(to right,#fff 0%,#b6f4b0 15%,#6fea61 36%,#40ea2e 62%,#24f411 100%)"></div>
<svg style="left:96px;top:67px;clip-path:inset(5px 0 0 0)" width="12" height="12" viewBox="0 0 12 12"><circle cx="5.6" cy="5.2" r="3.4" fill="none" stroke="#ececec" stroke-width="1"/></svg>
<div style="left:144.5px;top:72px;width:15.7px;height:119px;background:#f00;background:linear-gradient(to bottom,#ff0000 0%,#ff00ff 16.6%,#0000ff 33.3%,#00ffff 50%,#00ff00 66.6%,#ffff00 83.3%,#ff0000 100%)"></div>
<svg style="left:146px;top:147.5px;" width="13" height="13" viewBox="0 0 13 13"><circle cx="6.2" cy="6.3" r="3.6" fill="none" stroke="#f4f4f4" stroke-width="1.5"/></svg>
<div style="left:26px;top:70px;width:0.9px;height:460px;background:#202020;"></div>
<div style="left:26px;top:191.4px;width:135px;height:4.7px;background:#2a2a2a;"></div>
<div style="left:26px;top:195.9px;width:135px;height:1.799999999999983px;background:#466a8b;"></div>
<div style="left:26px;top:197.7px;width:135px;height:13.300000000000011px;background:#3b3939;background:linear-gradient(#2c2826 0,#31343a 1.4px,#38393c 5px,#3b3939 8px)"></div>
<span class="t" style="transform:scaleX(0.8996);left:58.80px;top:201.02px;font-size:8.6px;line-height:8.6px;color:#d2d2d2;">Xem trước cọ</span>
<svg style="left:137.4px;top:199.8px;" width="22" height="9" viewBox="0 0 22 9"><g fill="none" stroke="#cfcfcf"><path d="M4.6 2H1.4V7.5H7.4V4.6" stroke-width="1.15"/><path d="M4.2 4.8L8 1M5.4 0.8H8.2V3.6" stroke-width="0.95"/><path d="M14.6 1.4L19.8 6.6M19.8 1.4L14.6 6.6" stroke="#e6e2e2" stroke-width="1.8"/></g></svg>
<div style="left:27px;top:211.6px;width:134px;height:44.6px;background:#ffffff;"></div>
<div style="left:71px;top:211.6px;width:90px;height:44.6px;background-color:#fff;background-image:linear-gradient(45deg,#eeeeee 25%,transparent 25%,transparent 75%,#eeeeee 75%),linear-gradient(45deg,#eeeeee 25%,transparent 25%,transparent 75%,#eeeeee 75%);background-size:10px 10px;background-position:0 0,5px 5px"></div>
<div style="left:70.4px;top:211.6px;width:0.7px;height:44.6px;background:#cfcfcf;"></div>
<span class="t" style="transform:scaleX(0.9765);left:30.00px;top:214.19px;font-size:8.4px;line-height:8.4px;color:#78a4d2;">* 0.39mm</span>
<svg style="left:45px;top:231px;" width="8" height="8" viewBox="0 0 8 8"><circle cx="3.7" cy="3.5" r="2" fill="#161616"/></svg>
<svg style="left:71px;top:211.6px;" width="90" height="44.6" viewBox="0 0 90 44.6"><defs><linearGradient id="bs" x1="0" x2="1" y1="0" y2="0"><stop offset="0" stop-color="#000" stop-opacity="0.3"/><stop offset="0.3" stop-color="#000" stop-opacity="0.6"/><stop offset="0.62" stop-color="#000" stop-opacity="0.95"/><stop offset="0.85" stop-color="#000" stop-opacity="0.85"/><stop offset="1" stop-color="#000" stop-opacity="0.25"/></linearGradient><filter id="bsf" x="-5%" y="-20%" width="110%" height="140%"><feGaussianBlur stdDeviation="0.35"/></filter></defs><path d="M5.8 22.1C8.0 20.9 14.7 16.6 19.0 14.6C23.3 12.6 27.8 10.7 31.6 10.4C35.4 10.1 38.4 10.9 42.0 12.6C45.6 14.3 49.2 18.1 53.0 20.4C56.8 22.7 61.0 25.7 65.0 26.6C69.0 27.5 73.6 26.4 77.0 25.6C80.4 24.8 84.2 22.5 85.6 21.9L85.6 23.2C84.2 24.1 80.4 27.4 77.0 28.7C73.6 30.0 69.0 31.6 65.0 31.2C61.0 30.8 56.8 28.5 53.0 26.2C49.2 23.9 45.6 19.2 42.0 17.2C38.4 15.1 35.4 14.0 31.6 13.9C27.8 13.8 23.3 15.4 19.0 16.9C14.7 18.4 8.0 21.7 5.8 22.7z" fill="url(#bs)" filter="url(#bsf)"/></svg>
<div style="left:26px;top:256.6px;width:135px;height:2.9999999999999547px;background:#1c1a19;"></div>
<div style="left:26px;top:259.4px;width:135px;height:2.8000000000000114px;background:#41678c;"></div>
<div style="left:26px;top:262.2px;width:135px;height:12.800000000000011px;background:#3b3939;background:linear-gradient(#2c2826 0,#31343a 1.4px,#38393c 5px,#3b3939 8px)"></div>
<span class="t" style="transform:scaleX(0.9157);left:59.50px;top:265.82px;font-size:8.6px;line-height:8.6px;color:#d2d2d2;">Kiểm soát cọ</span>
<svg style="left:137.4px;top:264.0px;" width="22" height="9" viewBox="0 0 22 9"><g fill="none" stroke="#cfcfcf"><path d="M4.6 2H1.4V7.5H7.4V4.6" stroke-width="1.15"/><path d="M4.2 4.8L8 1M5.4 0.8H8.2V3.6" stroke-width="0.95"/><path d="M14.6 1.4L19.8 6.6M19.8 1.4L14.6 6.6" stroke="#e6e2e2" stroke-width="1.8"/></g></svg>
<div style="left:33px;top:285.8px;width:90px;height:10.8px;background:#ffffff;"></div>
<div style="left:33px;top:285.8px;width:16.2px;height:10.8px;background:#74baf4;background:linear-gradient(to right,#86c6fa,#6ab2ee 80%,#4f98d6 86%,#6ab2ee)"></div>
<div style="left:128.5px;top:283.6px;width:26px;height:15.5px;background:#3d3d3d;border-radius:2.5px"></div>
<span class="t" style="transform:scaleX(0.9443);left:135.80px;top:286.27px;font-size:9.6px;line-height:9.6px;color:#cfcfcf;">9.3</span>
<div style="left:33px;top:304.5px;width:89.3px;height:10.8px;background:#5aa4e0;background:linear-gradient(to right,#84c6fb,#4a93d0)"></div>
<span class="t" style="transform:scaleX(0.9925);left:127.40px;top:304.77px;font-size:9.6px;line-height:9.6px;color:#dadada;">100 %</span>
<div style="left:26px;top:407.5px;width:135px;height:3.300000000000023px;background:#1f2a36;"></div>
<div style="left:26px;top:410.6px;width:135px;height:1.599999999999966px;background:#5c7893;"></div>
<div style="left:26px;top:412.2px;width:135px;height:14.900000000000034px;background:#3b3939;background:linear-gradient(#2c2826 0,#31343a 1.4px,#38393c 5px,#3b3939 8px)"></div>
<span class="t" style="transform:scaleX(0.8935);left:65.00px;top:416.72px;font-size:8.6px;line-height:8.6px;color:#d2d2d2;">Cọ: Pencil</span>
<svg style="left:137.4px;top:414.8px;" width="22" height="9" viewBox="0 0 22 9"><g fill="none" stroke="#cfcfcf"><path d="M4.6 2H1.4V7.5H7.4V4.6" stroke-width="1.15"/><path d="M4.2 4.8L8 1M5.4 0.8H8.2V3.6" stroke-width="0.95"/><path d="M14.6 1.4L19.8 6.6M19.8 1.4L14.6 6.6" stroke="#e6e2e2" stroke-width="1.8"/></g></svg>
<div style="left:28px;top:427.9px;width:116.5px;height:77.9px;background:#555353;"></div>
<div style="left:28px;top:427.9px;width:116.5px;height:77.9px;overflow:hidden">
<div style="left:0;top:0;width:0.8px;height:80px;background:#6f6d6d"></div>
<div style="left:0;top:8.1px;width:116.5px;height:0.9px;background:#6a6868"></div>
<div style="left:2.4px;top:-3.9px;width:9.7px;height:9px;background:#f2e21a"></div>
<span class="t" style="transform:scaleX(0.9075);left:16.70px;top:-3.54px;font-size:9.5px;line-height:9.5px;color:#ececec;">30</span>
<span class="t" style="transform:scaleX(0.9143);left:40.30px;top:-3.54px;font-size:9.5px;line-height:9.5px;color:#ececec;">Sumi</span>
<div style="left:0;top:23.1px;width:116.5px;height:0.9px;background:#6a6868"></div>
<div style="left:2.4px;top:11.1px;width:9.7px;height:9px;background:#7fdcf8"></div>
<span class="t" style="transform:scaleX(0.9075);left:16.70px;top:11.46px;font-size:9.5px;line-height:9.5px;color:#ececec;">50</span>
<span class="t" style="transform:scaleX(0.9851);left:40.30px;top:11.46px;font-size:9.5px;line-height:9.5px;color:#ececec;">Watercolor</span>
<div style="left:0;top:38.1px;width:116.5px;height:0.9px;background:#6a6868"></div>
<div style="left:2.4px;top:26.1px;width:9.7px;height:9px;background:#7fdcf8"></div>
<span class="t" style="transform:scaleX(0.9332);left:16.70px;top:26.46px;font-size:9.5px;line-height:9.5px;color:#ececec;">100</span>
<span class="t" style="transform:scaleX(1.0342);left:40.30px;top:26.46px;font-size:9.5px;line-height:9.5px;color:#ececec;">Watercolor (Wet)</span>
<div style="left:0;top:53.1px;width:116.5px;height:0.9px;background:#6a6868"></div>
<div style="left:2.4px;top:41.1px;width:9.7px;height:9px;background:#f2e21a"></div>
<span class="t" style="transform:scaleX(0.9075);left:16.70px;top:41.46px;font-size:9.5px;line-height:9.5px;color:#ececec;">50</span>
<span class="t" style="transform:scaleX(0.9076);left:40.30px;top:41.46px;font-size:9.5px;line-height:9.5px;color:#ececec;">Acrylic</span>
<div style="left:0;top:68.1px;width:116.5px;height:0.9px;background:#6a6868"></div>
<div style="left:2.4px;top:56.1px;width:9.7px;height:9px;background:#d4d4d4"></div>
<span class="t" style="transform:scaleX(0.9332);left:16.70px;top:56.46px;font-size:9.5px;line-height:9.5px;color:#ececec;">100</span>
<span class="t" style="transform:scaleX(0.9244);left:40.30px;top:56.46px;font-size:9.5px;line-height:9.5px;color:#ececec;">Airbrush</span>
<div style="left:0;top:83.1px;width:116.5px;height:0.9px;background:#6a6868"></div>
<div style="left:2.4px;top:71.1px;width:9.7px;height:9px;background:#f9a8f4"></div>
<span class="t" style="transform:scaleX(0.9075);left:16.70px;top:71.46px;font-size:9.5px;line-height:9.5px;color:#ececec;">50</span>
<span class="t" style="transform:scaleX(0.8991);left:40.30px;top:71.46px;font-size:9.5px;line-height:9.5px;color:#ececec;">Blur</span>
</div>
<div style="left:145.5px;top:427px;width:14.5px;height:79px;background:#2b2b2b;"></div>
<div style="left:146.8px;top:437px;width:12px;height:59px;background:#353333;border-radius:3px"></div>
<div style="left:146.8px;top:461px;width:12px;height:14.5px;background:#6b6969;border-radius:3px"></div>
<svg style="left:149px;top:429px;" width="8" height="6" viewBox="0 0 8 6"><path d="M0.6 5L3.9 0.8L7.2 5z" fill="#b9b9b9"/></svg>
<svg style="left:149px;top:498px;" width="8" height="6" viewBox="0 0 8 6"><path d="M0.6 1L3.9 5.2L7.2 1z" fill="#b9b9b9"/></svg>
<div style="left:30.8px;top:508.6px;width:17.1px;height:16.8px;background:#414141;border-radius:2.5px;box-shadow:inset 0 0 0 0.7px #565656"></div>
<svg style="left:30.8px;top:508.8px;" width="17.4" height="17.4" viewBox="0 0 17.4 17.4"><path d="M4.8 9.6a2 2 0 0 1 .2-3.9a2.9 2.9 0 0 1 5.4-.9a2.5 2.5 0 0 1 2.2 4.8z" fill="#ececec"/><path d="M8.3 7V12.4" stroke="#3d3d3d" stroke-width="3.6"/><path d="M4.2 10.4H12.4L8.3 15.4z" fill="#3d3d3d"/><path d="M8.3 7.2V12" stroke="#ececec" stroke-width="2"/><path d="M5.4 11H11.2L8.3 14.5z" fill="#ececec"/></svg>
<div style="left:51px;top:508.6px;width:17px;height:16.8px;background:#414141;border-radius:2.5px;box-shadow:inset 0 0 0 0.7px #565656"></div>
<svg style="left:51px;top:508.8px;" width="17.4" height="17" viewBox="0 0 17.4 17"><path d="M4.8 3.4H10L12.6 6V13.8H4.8z" fill="none" stroke="#e6e6e6" stroke-width="1.1"/><path d="M9.8 3.6V6.2H12.4" fill="none" stroke="#e6e6e6" stroke-width="0.9"/></svg>
<div style="left:71.2px;top:508.6px;width:22.6px;height:16.8px;background:#414141;border-radius:2.5px;box-shadow:inset 0 0 0 0.7px #565656"></div>
<svg style="left:71.2px;top:508.8px;" width="21.6" height="16.2" viewBox="0 0 21.6 16.2"><path d="M3.8 3.6H8.2L10.6 6V13.4H3.8z" fill="none" stroke="#e6e6e6" stroke-width="1"/><rect x="5.4" y="7.4" width="2" height="2" fill="#e6e6e6"/><rect x="7.4" y="9.4" width="2" height="2" fill="#e6e6e6"/><path d="M13.6 7.4H19L16.3 10.6z" fill="#f0f0f0"/></svg>
<div style="left:96.9px;top:508.6px;width:17.4px;height:16.8px;background:#414141;border-radius:2.5px;box-shadow:inset 0 0 0 0.7px #565656"></div>
<svg style="left:96.9px;top:508.8px;" width="17" height="16.2" viewBox="0 0 17 16.2"><path d="M4.6 3.4H10L12.6 6V13.6H4.6z" fill="none" stroke="#e6e6e6" stroke-width="1.1"/><path d="M9.8 3.6V6.2H12.4" fill="none" stroke="#e6e6e6" stroke-width="0.9"/></svg>
<span class="t" style="transform:scaleX(0.8908);left:103.50px;top:515.58px;font-size:6.4px;line-height:6.4px;color:#e6e6e6;-webkit-text-stroke:0.08px currentColor;font-weight:bold;">S</span>
<div style="left:117px;top:508.6px;width:17.1px;height:16.8px;background:#414141;border-radius:2.5px;box-shadow:inset 0 0 0 0.7px #565656"></div>
<svg style="left:117px;top:508.8px;" width="17.4" height="17" viewBox="0 0 17.4 17"><path d="M3.6 4.6H7.4L8.6 6H13.8V13H3.6z" fill="#e8e8e8"/><path d="M3.6 7.2H13.8" stroke="#bdbdbd" stroke-width="0.6"/></svg>
<div style="left:151.9px;top:509px;width:5.6px;height:16.2px;background:#3d3b3b;border-radius:2.5px"></div>
<div style="left:161px;top:55px;width:4px;height:475px;background:#212121;"></div>
<div style="left:165px;top:55px;width:582px;height:17px;background:#222222;"></div>
<div style="left:165px;top:55px;width:192.8px;height:16.2px;background:#262626;"></div>
<div style="left:358px;top:55px;width:193.2px;height:16.2px;background:#333;background:linear-gradient(#3c3c3c,#2e2e2e)"></div>
<span class="t" style="transform:scaleX(0.9471);left:247.20px;top:60.12px;font-size:8.6px;line-height:8.6px;color:#d8d8d8;">Untitled</span>
<span class="t" style="transform:scaleX(0.9471);left:439.80px;top:60.12px;font-size:8.6px;line-height:8.6px;color:#d8d8d8;">Untitled</span>
<div style="left:165px;top:72px;width:564.2px;height:442.5px;background:#ffffff;"></div>
<svg style="left:165px;top:72px;" width="564" height="442" viewBox="0 0 564 442"><path d="M151.6 235.5C152.7 233.1 154.9 225.3 158.2 221.1C161.5 216.9 167.4 210.7 171.5 210.1C175.6 209.6 179.9 213.0 182.5 217.8C185.1 222.6 186.0 231.6 186.9 238.8C187.8 246.0 187.1 254.1 188.0 260.9C188.9 267.7 190.5 275.3 192.5 279.7C194.5 284.1 197.4 287.4 200.2 287.4C202.9 287.4 207.0 284.1 209.0 279.7C211.0 275.3 211.4 267.3 212.3 260.9C213.2 254.4 213.1 247.1 214.6 241.0C216.1 234.9 218.6 228.6 221.2 224.5C223.8 220.4 226.5 218.2 230.0 216.3C233.5 214.4 237.8 212.9 242.2 213.4C246.6 213.8 252.1 215.7 256.5 219.0C260.9 222.3 265.8 227.8 268.7 233.3C271.6 238.8 272.9 245.9 274.2 252.0C275.5 258.1 275.1 264.8 276.4 269.8C277.7 274.8 279.6 279.1 282.0 281.9C284.4 284.6 287.7 286.3 290.8 286.3C293.9 286.3 297.8 284.6 300.7 281.9C303.6 279.1 306.6 273.7 308.5 269.8C310.4 265.9 311.6 260.2 312.2 258.3" fill="none" stroke="#adf7a3" stroke-width="4.8" stroke-linecap="round" stroke-linejoin="round"/><circle cx="14.3" cy="221.3" r="2.3" fill="#fff" stroke="#222" stroke-width="0.9"/></svg>
<div style="left:729.2px;top:72px;width:14px;height:457px;background:#2b2b2b;"></div>
<div style="left:730px;top:81.5px;width:12.5px;height:424px;background:#383636;background:linear-gradient(to right,#2c2a2a,#393737 40%,#393737 60%,#2c2a2a)"></div>
<div style="left:730px;top:247.5px;width:12.5px;height:74.5px;background:#6b6969;border-radius:3.5px;background:linear-gradient(to right,#727070,#636161)"></div>
<svg style="left:732px;top:73.5px;" width="9" height="6" viewBox="0 0 9 6"><path d="M0.8 5.2L4.2 0.6L7.6 5.2z" fill="#b4b4b4"/></svg>
<svg style="left:732px;top:507.5px;" width="9" height="6" viewBox="0 0 9 6"><path d="M0.8 0.8L4.2 5.4L7.6 0.8z" fill="#b4b4b4"/></svg>
<div style="left:165px;top:514.5px;width:578px;height:14.5px;background:#2b2b2b;"></div>
<div style="left:174px;top:515.3px;width:562px;height:12.8px;background:#383636;background:linear-gradient(#2c2a2a,#393737 40%,#393737 60%,#2c2a2a)"></div>
<div style="left:381.5px;top:515.3px;width:90.3px;height:12.8px;background:#6b6969;border-radius:3.5px;background:linear-gradient(#727070,#636161)"></div>
<svg style="left:166.5px;top:518px;" width="6" height="9" viewBox="0 0 6 9"><path d="M5.2 0.8L0.6 4.2L5.2 7.6z" fill="#b4b4b4"/></svg>
<svg style="left:737px;top:518px;" width="6" height="9" viewBox="0 0 6 9"><path d="M0.8 0.8L5.4 4.2L0.8 7.6z" fill="#b4b4b4"/></svg>
<div style="left:743.2px;top:55px;width:4px;height:475px;background:#2b2b2b;"></div>
<div style="left:744.4px;top:55px;width:3.4px;height:475px;background:#1e1e1e;"></div>
<div style="left:747.6px;top:55px;width:276.4px;height:475px;background:#252525;"></div>
<div style="left:747.6px;top:53.8px;width:276.4px;height:2.200000000000003px;background:#4575a2;"></div>
<div style="left:747.6px;top:56px;width:276.4px;height:14.900000000000006px;background:#3b3939;background:linear-gradient(#2c2826 0,#31343a 1.4px,#38393c 5px,#3b3939 8px)"></div>
<span class="t" style="transform:scaleX(0.9589);left:858.80px;top:60.92px;font-size:8.6px;line-height:8.6px;color:#d2d2d2;">Hoa tiêu</span>
<svg style="left:999.4px;top:58.0px;" width="22" height="9" viewBox="0 0 22 9"><g fill="none" stroke="#cfcfcf"><path d="M4.6 2H1.4V7.5H7.4V4.6" stroke-width="1.15"/><path d="M4.2 4.8L8 1M5.4 0.8H8.2V3.6" stroke-width="0.95"/><path d="M14.6 1.4L19.8 6.6M19.8 1.4L14.6 6.6" stroke="#e6e2e2" stroke-width="1.8"/></g></svg>
<div style="left:747.6px;top:70.9px;width:276.4px;height:22.5px;background:#252525;"></div>
<div style="left:750px;top:73px;width:17.4px;height:17.4px;background:#414141;border-radius:2.5px;box-shadow:inset 0 0 0 0.7px #565656"></div>
<svg style="left:750px;top:73px;" width="17.4" height="17.4" viewBox="0 0 17.4 17.4"><circle cx="7.3" cy="7.5" r="3.7" fill="none" stroke="#e4e4e4" stroke-width="1.2"/><path d="M10.1 10.4L12.6 12.8" stroke="#e4e4e4" stroke-width="1.8" stroke-linecap="round"/><path d="M6.5 6.4L7.5 5.7V9.4" fill="none" stroke="#e8e8e8" stroke-width="0.95"/></svg>
<div style="left:776px;top:73px;width:17.4px;height:17.4px;background:#414141;border-radius:2.5px;box-shadow:inset 0 0 0 0.7px #565656"></div>
<svg style="left:776px;top:73px;" width="17.4" height="17.4" viewBox="0 0 17.4 17.4"><circle cx="7.3" cy="7.5" r="3.7" fill="none" stroke="#e4e4e4" stroke-width="1.2"/><path d="M10.1 10.4L12.6 12.8" stroke="#e4e4e4" stroke-width="1.8" stroke-linecap="round"/><path d="M5.5 7.5H9.1M7.3 5.7V9.3" stroke="#e8e8e8" stroke-width="1.15"/></svg>
<div style="left:796.2px;top:73px;width:17.4px;height:17.4px;background:#414141;border-radius:2.5px;box-shadow:inset 0 0 0 0.7px #565656"></div>
<svg style="left:796.2px;top:73px;" width="17.4" height="17.4" viewBox="0 0 17.4 17.4"><rect x="3.4" y="3.8" width="10.8" height="9.8" fill="none" stroke="#d4d4d4" stroke-width="1"/><g fill="#e4e4e4"><path d="M4.6 5H7.6L4.6 8z"/><path d="M13 5H10L13 8z"/><path d="M4.6 12.4H7.6L4.6 9.4z"/><path d="M13 12.4H10L13 9.4z"/></g></svg>
<div style="left:816.4px;top:73px;width:17.4px;height:17.4px;background:#414141;border-radius:2.5px;box-shadow:inset 0 0 0 0.7px #565656"></div>
<svg style="left:816.4px;top:73px;" width="17.4" height="17.4" viewBox="0 0 17.4 17.4"><circle cx="7.3" cy="7.5" r="3.7" fill="none" stroke="#e4e4e4" stroke-width="1.2"/><path d="M10.1 10.4L12.6 12.8" stroke="#e4e4e4" stroke-width="1.8" stroke-linecap="round"/><path d="M5.5 7.5H9.1" stroke="#e8e8e8" stroke-width="1.15"/></svg>
<div style="left:841.6px;top:73px;width:17.4px;height:17.4px;background:#414141;border-radius:2.5px;box-shadow:inset 0 0 0 0.7px #565656"></div>
<svg style="left:841.6px;top:73px;" width="17.4" height="17.4" viewBox="0 0 17.4 17.4"><path d="M5.6 4.7A5.1 5.1 0 1 1 3.9 7.4" fill="none" stroke="#dedede" stroke-width="1.2"/><path d="M3 3.6L6.8 3.4L5.6 6.6z" fill="#dedede"/><rect x="6.2" y="6.8" width="5.2" height="3.8" fill="#e2e2e2" transform="rotate(-22 8.8 8.7)"/></svg>
<div style="left:862px;top:73px;width:17.4px;height:17.4px;background:#222;border-radius:2.5px;box-shadow:inset 0 0 0 0.9px #444"></div>
<svg style="left:862px;top:73px;" width="17.4" height="17.4" viewBox="0 0 17.4 17.4"><rect x="5.4" y="6" width="6.8" height="5.4" fill="#f2f2f2"/><g stroke="#e8e8e8" stroke-width="1.1" fill="none"><path d="M5.6 6.2L3.4 4M12 6.2L14.2 4M5.6 11.2L3.4 13.4M12 11.2L14.2 13.4"/><path d="M3.2 5.6V3.8H5M12.6 3.8H14.4V5.6M14.4 11.8V13.6H12.6M5 13.6H3.2V11.8" stroke-width="0.8"/></g></svg>
<div style="left:882.2px;top:73px;width:17.4px;height:17.4px;background:#414141;border-radius:2.5px;box-shadow:inset 0 0 0 0.7px #565656"></div>
<svg style="left:882.2px;top:73px;" width="17.4" height="17.4" viewBox="0 0 17.4 17.4"><path d="M11.8 4.7A5.1 5.1 0 1 0 13.5 7.4" fill="none" stroke="#dedede" stroke-width="1.2"/><path d="M14.4 3.6L10.6 3.4L11.8 6.6z" fill="#dedede"/><rect x="6" y="6.8" width="5.2" height="3.8" fill="#e2e2e2" transform="rotate(22 8.6 8.7)"/></svg>
<div style="left:908.2px;top:73px;width:17.4px;height:17.4px;background:#414141;border-radius:2.5px;box-shadow:inset 0 0 0 0.7px #565656"></div>
<svg style="left:908.2px;top:73px;" width="17.4" height="17.4" viewBox="0 0 17.4 17.4"><rect x="3.4" y="7" width="3.8" height="5.8" fill="#ececec"/><rect x="10.9" y="7.4" width="3" height="5" fill="none" stroke="#ececec" stroke-width="0.95"/><path d="M8.6 5.6V14" stroke="#c4c4c4" stroke-width="0.8"/><path d="M5.2 6C6 2.8 11.4 2.6 12.4 6" fill="none" stroke="#ececec" stroke-width="0.95"/></svg>
<div style="left:771.5px;top:77.5px;width:0.8px;height:8px;background:#555;"></div>
<div style="left:837.2px;top:77.5px;width:0.8px;height:8px;background:#555;"></div>
<div style="left:903px;top:77.5px;width:0.8px;height:8px;background:#555;"></div>
<div style="left:747.6px;top:93.4px;width:276.4px;height:29.4px;background:#4a4848;"></div>
<div style="left:863.7px;top:93.4px;width:43.5px;height:29.2px;background:#ffffff;"></div>
<div style="left:873.6px;top:101px;width:13.6px;height:10.2px;background:#fff;box-shadow:inset 0 0 0 1.5px #e60000;background:transparent"></div>
<div style="left:747.6px;top:122.6px;width:276.4px;height:3.3000000000000087px;background:#1e2830;"></div>
<div style="left:747.6px;top:125.7px;width:276.4px;height:2.499999999999986px;background:#56789a;"></div>
<div style="left:747.6px;top:128.2px;width:276.4px;height:13.5px;background:#3b3939;background:linear-gradient(#2c2826 0,#31343a 1.4px,#38393c 5px,#3b3939 8px)"></div>
<span class="t" style="transform:scaleX(0.8222);left:867.50px;top:132.02px;font-size:8.6px;line-height:8.6px;color:#d2d2d2;">Lớp</span>
<svg style="left:999.4px;top:130.0px;" width="22" height="9" viewBox="0 0 22 9"><g fill="none" stroke="#cfcfcf"><path d="M4.6 2H1.4V7.5H7.4V4.6" stroke-width="1.15"/><path d="M4.2 4.8L8 1M5.4 0.8H8.2V3.6" stroke-width="0.95"/><path d="M14.6 1.4L19.8 6.6M19.8 1.4L14.6 6.6" stroke="#e6e2e2" stroke-width="1.8"/></g></svg>
<div style="left:747.6px;top:141.8px;width:276.4px;height:60px;background:#252525;"></div>
<span class="t" style="transform:scaleX(0.9767);left:751.60px;top:150.12px;font-size:8.6px;line-height:8.6px;color:#e0e0e0;">Độ trong</span>
<div style="left:821px;top:147px;width:161.8px;height:11.6px;background:#5aa4e0;background:linear-gradient(to right,#84c6fb,#4a93d0)"></div>
<span class="t" style="transform:scaleX(0.9436);left:988.00px;top:150.12px;font-size:8.6px;line-height:8.6px;color:#e0e0e0;">100 %</span>
<span class="t" style="transform:scaleX(0.9354);left:751.60px;top:168.22px;font-size:8.6px;line-height:8.6px;color:#e0e0e0;">Pha trộn</span>
<div style="left:822.2px;top:163.8px;width:197px;height:15.2px;background:#3d3d3d;border-radius:2.5px"></div>
<span class="t" style="transform:scaleX(0.9027);left:824.00px;top:167.92px;font-size:8.6px;line-height:8.6px;color:#dadada;">Bình thường</span>
<svg style="left:1009px;top:169.5px;" width="8" height="5" viewBox="0 0 8 5"><path d="M0.8 0.8H6.4L3.6 4z" fill="#a8a8a8"/></svg>
<svg style="left:753.8px;top:187.2px;" width="10" height="10" viewBox="0 0 10 10"><rect x="0.6" y="0.6" width="7.6" height="7.6" rx="0.3" fill="none" stroke="#d0d0d0" stroke-width="0.85"/></svg>
<span class="t" style="transform:scaleX(0.9248);left:766.30px;top:187.72px;font-size:8.6px;line-height:8.6px;color:#e0e0e0;">Bảo vệ alpha</span>
<svg style="left:844.8px;top:187.2px;" width="10" height="10" viewBox="0 0 10 10"><rect x="0.6" y="0.6" width="7.6" height="7.6" rx="0.3" fill="none" stroke="#4f4f4f" stroke-width="0.85"/></svg>
<span class="t" style="transform:scaleX(0.9185);left:857.00px;top:187.72px;font-size:8.6px;line-height:8.6px;color:#7a7a7a;">Xén bớt</span>
<svg style="left:935.4px;top:187.2px;" width="10" height="10" viewBox="0 0 10 10"><rect x="0.6" y="0.6" width="7.6" height="7.6" rx="0.3" fill="none" stroke="#d0d0d0" stroke-width="0.85"/></svg>
<span class="t" style="transform:scaleX(0.9015);left:947.40px;top:187.72px;font-size:8.6px;line-height:8.6px;color:#e0e0e0;">Khóa</span>
<div style="left:747.6px;top:201.8px;width:276.4px;height:146.2px;background:#4a4848;"></div>
<div style="left:749.6px;top:202px;width:14.2px;height:28.8px;background:#5a5a5a;"></div>
<div style="left:763.8px;top:202px;width:243.4px;height:28.8px;background:#559bd4;"></div>
<div style="left:749.6px;top:230.8px;width:257.6px;height:0.9px;background:#353434;"></div>
<svg style="left:751.3px;top:211.5px;" width="10" height="10" viewBox="0 0 10 10"><circle cx="5" cy="5" r="3.2" fill="#dedede"/></svg>
<div style="left:774.7px;top:207.7px;width:26.4px;height:17px;background-color:#fff;background-image:linear-gradient(45deg,#ebe4e4 25%,transparent 25%,transparent 75%,#ebe4e4 75%),linear-gradient(45deg,#ebe4e4 25%,transparent 25%,transparent 75%,#ebe4e4 75%);background-size:6px 6px;background-position:0 0,3px 3px"></div>
<span class="t" style="transform:scaleX(1.0042);left:813.50px;top:212.58px;font-size:9px;line-height:9px;color:#ffffff;font-weight:bold;">Lớp1</span>
<svg style="left:990.5px;top:210px;" width="14" height="14" viewBox="0 0 14 14"><rect x="-1.3" y="-7" width="2.6" height="3.4" fill="#fff" transform="translate(7 7) rotate(0)"/><rect x="-1.3" y="-7" width="2.6" height="3.4" fill="#fff" transform="translate(7 7) rotate(45)"/><rect x="-1.3" y="-7" width="2.6" height="3.4" fill="#fff" transform="translate(7 7) rotate(90)"/><rect x="-1.3" y="-7" width="2.6" height="3.4" fill="#fff" transform="translate(7 7) rotate(135)"/><rect x="-1.3" y="-7" width="2.6" height="3.4" fill="#fff" transform="translate(7 7) rotate(180)"/><rect x="-1.3" y="-7" width="2.6" height="3.4" fill="#fff" transform="translate(7 7) rotate(225)"/><rect x="-1.3" y="-7" width="2.6" height="3.4" fill="#fff" transform="translate(7 7) rotate(270)"/><rect x="-1.3" y="-7" width="2.6" height="3.4" fill="#fff" transform="translate(7 7) rotate(315)"/><circle cx="7" cy="7" r="4.4" fill="#fff"/><circle cx="7" cy="7" r="1.7" fill="#559bd4"/></svg>
<div style="left:1007.2px;top:201.8px;width:16.8px;height:147px;background:#2b2b2b;"></div>
<div style="left:1008.2px;top:209.5px;width:13.6px;height:130px;background:#383636;background:linear-gradient(to right,#2c2a2a,#393737 40%,#393737 60%,#2c2a2a)"></div>
<div style="left:1008.2px;top:209.5px;width:13.6px;height:130px;background:#6b6969;border-radius:3.5px;background:linear-gradient(to right,#727070,#636161)"></div>
<svg style="left:1010.6px;top:202.6px;" width="9" height="6" viewBox="0 0 9 6"><path d="M0.8 5.2L4.2 0.6L7.6 5.2z" fill="#b4b4b4"/></svg>
<svg style="left:1010.6px;top:341px;" width="9" height="6" viewBox="0 0 9 6"><path d="M0.8 0.8L4.2 5.4L7.6 0.8z" fill="#b4b4b4"/></svg>
<div style="left:747.6px;top:348px;width:276.4px;height:29px;background:#272727;"></div>
<div style="left:751.8px;top:351.5px;width:17px;height:16.8px;background:#414141;border-radius:2.5px;box-shadow:inset 0 0 0 0.7px #565656"></div>
<svg style="left:751.8px;top:351.5px;" width="17.4" height="17" viewBox="0 0 17.4 17"><path d="M4.8 3.4H10L12.6 6V13.8H4.8z" fill="none" stroke="#e6e6e6" stroke-width="1.1"/><path d="M9.8 3.6V6.2H12.4" fill="none" stroke="#e6e6e6" stroke-width="0.9"/></svg>
<div style="left:772px;top:351.5px;width:17px;height:16.8px;background:#414141;border-radius:2.5px;box-shadow:inset 0 0 0 0.7px #565656"></div>
<svg style="left:772px;top:351.5px;" width="17.4" height="17" viewBox="0 0 17.4 17"><path d="M4.8 3.4H10L12.6 6V13.8H4.8z" fill="none" stroke="#e6e6e6" stroke-width="1.1"/><path d="M9.8 3.6V6.2H12.4" fill="none" stroke="#e6e6e6" stroke-width="0.9"/></svg>
<span class="t" style="transform:scaleX(0.9544);left:778.60px;top:358.48px;font-size:6.4px;line-height:6.4px;color:#e6e6e6;-webkit-text-stroke:0.08px currentColor;font-weight:bold;">8</span>
<div style="left:792.2px;top:351.5px;width:17px;height:16.8px;background:#414141;border-radius:2.5px;box-shadow:inset 0 0 0 0.7px #565656"></div>
<svg style="left:792.2px;top:351.5px;" width="17.4" height="17" viewBox="0 0 17.4 17"><path d="M4.8 3.4H10L12.6 6V13.8H4.8z" fill="none" stroke="#e6e6e6" stroke-width="1.1"/><path d="M9.8 3.6V6.2H12.4" fill="none" stroke="#e6e6e6" stroke-width="0.9"/></svg>
<span class="t" style="transform:scaleX(0.8421);left:799.00px;top:358.48px;font-size:6.4px;line-height:6.4px;color:#e6e6e6;-webkit-text-stroke:0.08px currentColor;font-weight:bold;">1</span>
<div style="left:812.5px;top:351.5px;width:22.4px;height:16.8px;background:#414141;border-radius:2.5px;box-shadow:inset 0 0 0 0.7px #565656"></div>
<svg style="left:812.5px;top:351.5px;" width="22.4" height="16.8" viewBox="0 0 22.4 16.8"><path d="M3.6 3.4H8L10.4 5.8V13.4H3.6z" fill="none" stroke="#e6e6e6" stroke-width="1"/><path d="M9.4 9V14M6.9 11.5H11.9" stroke="#3d3d3d" stroke-width="2.6"/><path d="M9.4 9.2V13.8M7.1 11.5H11.7" stroke="#f0f0f0" stroke-width="1.1"/><path d="M14.2 7.6H19.6L16.9 10.8z" fill="#f0f0f0"/></svg>
<div style="left:837.6px;top:351.5px;width:17.4px;height:16.8px;background:#414141;border-radius:2.5px;box-shadow:inset 0 0 0 0.7px #565656"></div>
<svg style="left:837.6px;top:351.5px;" width="17.4" height="17" viewBox="0 0 17.4 17"><path d="M3.6 4.6H7.4L8.6 6H13.8V13H3.6z" fill="#e8e8e8"/><path d="M3.6 7.2H13.8" stroke="#bdbdbd" stroke-width="0.6"/></svg>
<div style="left:863.4px;top:351.5px;width:17.4px;height:16.8px;background:#414141;border-radius:2.5px;box-shadow:inset 0 0 0 0.7px #565656"></div>
<svg style="left:863.4px;top:351.5px;" width="17.4" height="16.8" viewBox="0 0 17.4 16.8"><g fill="none" stroke="#d6d6d6" stroke-width="1"><rect x="4.2" y="6.6" width="6.8" height="6.6"/><path d="M6.6 6.4V4.2H13.4V10.8H11.2"/></g></svg>
<div style="left:883.6px;top:351.5px;width:17.4px;height:16.8px;background:#222;border-radius:2.5px;box-shadow:inset 0 0 0 0.9px #444"></div>
<svg style="left:883.6px;top:351.5px;" width="17.4" height="16.8" viewBox="0 0 17.4 16.8"><g fill="none" stroke="#ececec" stroke-width="0.9"><rect x="4" y="3.6" width="3.4" height="3"/><rect x="4" y="10.2" width="3.4" height="3"/><path d="M5.7 6.6V10.2M5.7 8.4H9"/></g><rect x="9.4" y="6.4" width="4.6" height="4" fill="#ececec"/></svg>
<div style="left:909.4px;top:351.5px;width:17.4px;height:16.8px;background:#414141;border-radius:2.5px;box-shadow:inset 0 0 0 0.7px #565656"></div>
<svg style="left:909.4px;top:351.5px;" width="17.4" height="16.8" viewBox="0 0 17.4 16.8"><g fill="none" stroke="#ececec"><path d="M4.8 6.2H12.6V13.6H4.8z" stroke-width="1.2"/><path d="M3.8 5.2H13.6M7 4.8V3.4H10.4V4.8" stroke-width="1.1"/><path d="M7.2 7.6V12.2M8.7 7.6V12.2M10.2 7.6V12.2" stroke-width="0.8"/></g></svg>
<div style="left:859px;top:356px;width:0.8px;height:8px;background:#555;"></div>
<div style="left:905px;top:356px;width:0.8px;height:8px;background:#555;"></div>
<div style="left:747.6px;top:369.8px;width:276.4px;height:6.099999999999977px;background:#232a32;"></div>
<div style="left:747.6px;top:375.7px;width:276.4px;height:2.3000000000000114px;background:#3d6389;"></div>
<div style="left:747.6px;top:378px;width:276.4px;height:13.199999999999989px;background:#3b3939;background:linear-gradient(#2c2826 0,#31343a 1.4px,#38393c 5px,#3b3939 8px)"></div>
<span class="t" style="transform:scaleX(0.9658);left:855.30px;top:381.92px;font-size:8.6px;line-height:8.6px;color:#d2d2d2;">Reference</span>
<svg style="left:999.4px;top:380.1px;" width="22" height="9" viewBox="0 0 22 9"><g fill="none" stroke="#cfcfcf"><path d="M4.6 2H1.4V7.5H7.4V4.6" stroke-width="1.15"/><path d="M4.2 4.8L8 1M5.4 0.8H8.2V3.6" stroke-width="0.95"/><path d="M14.6 1.4L19.8 6.6M19.8 1.4L14.6 6.6" stroke="#e6e2e2" stroke-width="1.8"/></g></svg>
<div style="left:747.6px;top:392.2px;width:276.4px;height:23.6px;background:#252525;"></div>
<div style="left:750.3px;top:395.2px;width:17.4px;height:17.4px;background:#414141;border-radius:2.5px;box-shadow:inset 0 0 0 0.7px #565656"></div>
<svg style="left:750.3px;top:395.2px;" width="17.4" height="17.4" viewBox="0 0 17.4 17.4"><path d="M4.8 9.6a2 2 0 0 1 .2-3.9a2.9 2.9 0 0 1 5.4-.9a2.5 2.5 0 0 1 2.2 4.8z" fill="#ececec"/><path d="M8.3 7V12.4" stroke="#3d3d3d" stroke-width="3.6"/><path d="M4.2 10.4H12.4L8.3 15.4z" fill="#3d3d3d"/><path d="M8.3 7.2V12" stroke="#ececec" stroke-width="2"/><path d="M5.4 11H11.2L8.3 14.5z" fill="#ececec"/></svg>
<div style="left:770.6px;top:395.2px;width:17.4px;height:17.4px;background:#414141;border-radius:2.5px;box-shadow:inset 0 0 0 0.7px #565656"></div>
<svg style="left:770.6px;top:395.2px;" width="17.4" height="17.4" viewBox="0 0 17.4 17.4"><path d="M3.6 4.6H7.2L8.4 6H13V7.4H5.6L3.6 12.6z" fill="#e4e4e4"/><path d="M5.8 8H14.8L12.8 12.8H3.8z" fill="#e4e4e4"/></svg>
<div style="left:790.8px;top:395.2px;width:17.4px;height:17.4px;background:#222;border-radius:2.5px;box-shadow:inset 0 0 0 0.9px #444"></div>
<svg style="left:790.8px;top:395.2px;" width="17.4" height="17.4" viewBox="0 0 17.4 17.4"><path d="M5.3 5.7L11.3 11.3M11.3 5.7L5.3 11.3" stroke="#ececec" stroke-width="1.4"/></svg>
<div style="left:816px;top:395.2px;width:17.4px;height:17.4px;background:#222;border-radius:2.5px;box-shadow:inset 0 0 0 0.9px #444"></div>
<svg style="left:816px;top:395.2px;" width="17.4" height="17.4" viewBox="0 0 17.4 17.4"><circle cx="7.3" cy="7.5" r="3.7" fill="none" stroke="#e4e4e4" stroke-width="1.2"/><path d="M10.1 10.4L12.6 12.8" stroke="#e4e4e4" stroke-width="1.8" stroke-linecap="round"/><path d="M5.5 7.5H9.1M7.3 5.7V9.3" stroke="#e8e8e8" stroke-width="1.15"/></svg>
<div style="left:836.5px;top:395.2px;width:17.4px;height:17.4px;background:#222;border-radius:2.5px;box-shadow:inset 0 0 0 0.9px #444"></div>
<svg style="left:836.5px;top:395.2px;" width="17.4" height="17.4" viewBox="0 0 17.4 17.4"><rect x="3.4" y="3.8" width="10.8" height="9.8" fill="none" stroke="#d4d4d4" stroke-width="1"/><g fill="#e4e4e4"><path d="M4.6 5H7.6L4.6 8z"/><path d="M13 5H10L13 8z"/><path d="M4.6 12.4H7.6L4.6 9.4z"/><path d="M13 12.4H10L13 9.4z"/></g></svg>
<div style="left:856.8px;top:395.2px;width:17.4px;height:17.4px;background:#222;border-radius:2.5px;box-shadow:inset 0 0 0 0.9px #444"></div>
<svg style="left:856.8px;top:395.2px;" width="17.4" height="17.4" viewBox="0 0 17.4 17.4"><circle cx="7.3" cy="7.5" r="3.7" fill="none" stroke="#e4e4e4" stroke-width="1.2"/><path d="M10.1 10.4L12.6 12.8" stroke="#e4e4e4" stroke-width="1.8" stroke-linecap="round"/><path d="M5.5 7.5H9.1" stroke="#e8e8e8" stroke-width="1.15"/></svg>
<div style="left:881.8px;top:395.2px;width:17.4px;height:17.4px;background:#222;border-radius:2.5px;box-shadow:inset 0 0 0 0.9px #444"></div>
<svg style="left:881.8px;top:395.2px;" width="17.4" height="17.4" viewBox="0 0 17.4 17.4"><path d="M4 14L4.5 11.8L9.6 6.6L11.4 8.4L6.2 13.5z" fill="none" stroke="#ececec" stroke-width="1" stroke-linejoin="round"/><path d="M9 5.4L10.4 4L11.3 4.9L12.6 3.6A1.3 1.3 0 0 1 14.5 5.5L13.2 6.8L14.1 7.7L12.7 9.1z" fill="#ececec"/></svg>
<div style="left:902.2px;top:394.8px;width:18.2px;height:18.4px;background:#58a2e0;border-radius:2.5px"></div>
<svg style="left:902.6px;top:395.59999999999997px;" width="17" height="17" viewBox="0 0 20.4 20.2"><g stroke="#f4faff" stroke-linecap="round" fill="none"><path d="M7.2 5.4L7.8 11M10 3.1L10.2 10.5M12.6 4L12.4 10.5M15 6.4L14.3 11.5" stroke-width="1.9"/><path d="M3.7 10.4L7.6 14" stroke-width="2.1"/></g><path d="M6.7 9.6L15 10.6C15 13.6 13.9 15.6 13.3 17.3H8.1C7 15.6 6.5 13.4 6.7 9.6z" fill="#f4faff"/></svg>
<div style="left:927.8px;top:395.2px;width:17.4px;height:17.4px;background:#222;border-radius:2.5px;box-shadow:inset 0 0 0 0.9px #444"></div>
<svg style="left:927.8px;top:395.2px;" width="17.4" height="17.4" viewBox="0 0 17.4 17.4"><path d="M5.6 4.7A5.1 5.1 0 1 1 3.9 7.4" fill="none" stroke="#dedede" stroke-width="1.2"/><path d="M3 3.6L6.8 3.4L5.6 6.6z" fill="#dedede"/><rect x="6.2" y="6.8" width="5.2" height="3.8" fill="#e2e2e2" transform="rotate(-22 8.8 8.7)"/></svg>
<div style="left:948px;top:395.2px;width:17.4px;height:17.4px;background:#222;border-radius:2.5px;box-shadow:inset 0 0 0 0.9px #444"></div>
<svg style="left:948px;top:395.2px;" width="17.4" height="17.4" viewBox="0 0 17.4 17.4"><rect x="5.4" y="6" width="6.8" height="5.4" fill="#f2f2f2"/><g stroke="#e8e8e8" stroke-width="1.1" fill="none"><path d="M5.6 6.2L3.4 4M12 6.2L14.2 4M5.6 11.2L3.4 13.4M12 11.2L14.2 13.4"/><path d="M3.2 5.6V3.8H5M12.6 3.8H14.4V5.6M14.4 11.8V13.6H12.6M5 13.6H3.2V11.8" stroke-width="0.8"/></g></svg>
<div style="left:968.2px;top:395.2px;width:17.4px;height:17.4px;background:#222;border-radius:2.5px;box-shadow:inset 0 0 0 0.9px #444"></div>
<svg style="left:968.2px;top:395.2px;" width="17.4" height="17.4" viewBox="0 0 17.4 17.4"><path d="M11.8 4.7A5.1 5.1 0 1 0 13.5 7.4" fill="none" stroke="#dedede" stroke-width="1.2"/><path d="M14.4 3.6L10.6 3.4L11.8 6.6z" fill="#dedede"/><rect x="6" y="6.8" width="5.2" height="3.8" fill="#e2e2e2" transform="rotate(22 8.6 8.7)"/></svg>
<div style="left:993.4px;top:395.2px;width:17.4px;height:17.4px;background:#222;border-radius:2.5px;box-shadow:inset 0 0 0 0.9px #444"></div>
<svg style="left:993.4px;top:395.2px;" width="17.4" height="17.4" viewBox="0 0 17.4 17.4"><rect x="3.4" y="7" width="3.8" height="5.8" fill="#ececec"/><rect x="10.9" y="7.4" width="3" height="5" fill="none" stroke="#ececec" stroke-width="0.95"/><path d="M8.6 5.6V14" stroke="#c4c4c4" stroke-width="0.8"/><path d="M5.2 6C6 2.8 11.4 2.6 12.4 6" fill="none" stroke="#ececec" stroke-width="0.95"/></svg>
<div style="left:812px;top:400.5px;width:0.8px;height:8px;background:#555;"></div>
<div style="left:878px;top:400.5px;width:0.8px;height:8px;background:#555;"></div>
<div style="left:924px;top:400.5px;width:0.8px;height:8px;background:#555;"></div>
<div style="left:990px;top:400.5px;width:0.8px;height:8px;background:#555;"></div>
<div style="left:747.6px;top:415.5px;width:276.4px;height:4.4px;background-color:#fcfcfc;background-image:linear-gradient(45deg,#ececec 25%,transparent 25%,transparent 75%,#ececec 75%),linear-gradient(45deg,#ececec 25%,transparent 25%,transparent 75%,#ececec 75%);background-size:8.6px 8.6px;background-position:0 0,4.3px 4.3px"></div>
<div style="left:747.6px;top:419.8px;width:276.4px;height:4.0000000000000115px;background:#1e2a36;"></div>
<div style="left:747.6px;top:423.6px;width:276.4px;height:1.5px;background:#5b7590;"></div>
<div style="left:747.6px;top:425.1px;width:276.4px;height:14.5px;background:#3b3939;background:linear-gradient(#2c2826 0,#31343a 1.4px,#38393c 5px,#3b3939 8px)"></div>
<span class="t" style="transform:scaleX(0.8806);left:855.40px;top:429.42px;font-size:8.6px;line-height:8.6px;color:#d2d2d2;">Brush Size</span>
<svg style="left:999.4px;top:427.5px;" width="22" height="9" viewBox="0 0 22 9"><g fill="none" stroke="#cfcfcf"><path d="M4.6 2H1.4V7.5H7.4V4.6" stroke-width="1.15"/><path d="M4.2 4.8L8 1M5.4 0.8H8.2V3.6" stroke-width="0.95"/><path d="M14.6 1.4L19.8 6.6M19.8 1.4L14.6 6.6" stroke="#e6e2e2" stroke-width="1.8"/></g></svg>
<div style="left:747.6px;top:439.6px;width:276.4px;height:90.4px;background:#434141;"></div>
<div style="left:747px;top:439.2px;width:262px;height:90.6px;overflow:hidden">
<div style="left:0.8px;top:0.8px;width:29px;height:36px;background:#555353"></div>
<div style="left:0.8px;top:38.6px;width:29px;height:36px;background:#555353"></div>
<div style="left:0.8px;top:76.4px;width:29px;height:36px;background:#555353"></div>
<div style="left:14.80px;top:14.90px;width:1.00px;height:1.00px;border-radius:50%;background:#787676"></div>
<div style="left:10.30px;top:48.10px;width:10.00px;height:10.00px;border-radius:50%;background:#f0f0f0"></div>
<div style="left:6.20px;top:81.50px;width:18.20px;height:18.20px;border-radius:50%;background:#f0f0f0"></div>
<span class="t" style="transform:scaleX(0.9000);left:13.35px;top:29.10px;font-size:7.8px;line-height:7.8px;color:#f0f0f0;-webkit-text-stroke:0.08px currentColor;">1</span>
<span class="t" style="transform:scaleX(0.9000);left:11.39px;top:66.50px;font-size:7.8px;line-height:7.8px;color:#f0f0f0;-webkit-text-stroke:0.08px currentColor;">12</span>
<div style="left:30.8px;top:0.8px;width:29px;height:36px;background:#555353"></div>
<div style="left:30.8px;top:38.6px;width:29px;height:36px;background:#555353"></div>
<div style="left:30.8px;top:76.4px;width:29px;height:36px;background:#555353"></div>
<div style="left:44.70px;top:14.80px;width:1.20px;height:1.20px;border-radius:50%;background:#a8a6a6"></div>
<div style="left:39.50px;top:47.30px;width:11.60px;height:11.60px;border-radius:50%;background:#f0f0f0"></div>
<div style="left:36.20px;top:81.50px;width:18.20px;height:18.20px;border-radius:50%;background:#f0f0f0"></div>
<span class="t" style="transform:scaleX(0.9000);left:40.42px;top:29.10px;font-size:7.8px;line-height:7.8px;color:#f0f0f0;-webkit-text-stroke:0.08px currentColor;">1.5</span>
<span class="t" style="transform:scaleX(0.9000);left:41.39px;top:66.50px;font-size:7.8px;line-height:7.8px;color:#f0f0f0;-webkit-text-stroke:0.08px currentColor;">15</span>
<div style="left:60.8px;top:0.8px;width:29px;height:36px;background:#555353"></div>
<div style="left:60.8px;top:38.6px;width:29px;height:36px;background:#555353"></div>
<div style="left:60.8px;top:76.4px;width:29px;height:36px;background:#555353"></div>
<div style="left:74.45px;top:14.55px;width:1.70px;height:1.70px;border-radius:50%;background:#e4e4e4"></div>
<div style="left:67.30px;top:45.10px;width:16.00px;height:16.00px;border-radius:50%;background:#f0f0f0"></div>
<div style="left:66.20px;top:81.50px;width:18.20px;height:18.20px;border-radius:50%;background:#f0f0f0"></div>
<span class="t" style="transform:scaleX(0.9000);left:73.35px;top:29.10px;font-size:7.8px;line-height:7.8px;color:#f0f0f0;-webkit-text-stroke:0.08px currentColor;">2</span>
<span class="t" style="transform:scaleX(0.9000);left:71.39px;top:66.50px;font-size:7.8px;line-height:7.8px;color:#f0f0f0;-webkit-text-stroke:0.08px currentColor;">20</span>
<div style="left:90.8px;top:0.8px;width:29px;height:36px;background:#555353"></div>
<div style="left:90.8px;top:38.6px;width:29px;height:36px;background:#555353"></div>
<div style="left:90.8px;top:76.4px;width:29px;height:36px;background:#555353"></div>
<div style="left:104.05px;top:14.15px;width:2.50px;height:2.50px;border-radius:50%;background:#f0f0f0"></div>
<div style="left:96.20px;top:44.00px;width:18.20px;height:18.20px;border-radius:50%;background:#f0f0f0"></div>
<div style="left:96.20px;top:81.50px;width:18.20px;height:18.20px;border-radius:50%;background:#f0f0f0"></div>
<span class="t" style="transform:scaleX(0.9000);left:103.35px;top:29.10px;font-size:7.8px;line-height:7.8px;color:#f0f0f0;-webkit-text-stroke:0.08px currentColor;">3</span>
<span class="t" style="transform:scaleX(0.9000);left:101.39px;top:66.50px;font-size:7.8px;line-height:7.8px;color:#f0f0f0;-webkit-text-stroke:0.08px currentColor;">25</span>
<div style="left:120.8px;top:0.8px;width:29px;height:36px;background:#555353"></div>
<div style="left:120.8px;top:38.6px;width:29px;height:36px;background:#555353"></div>
<div style="left:120.8px;top:76.4px;width:29px;height:36px;background:#555353"></div>
<div style="left:133.70px;top:13.80px;width:3.20px;height:3.20px;border-radius:50%;background:#f0f0f0"></div>
<div style="left:126.20px;top:44.00px;width:18.20px;height:18.20px;border-radius:50%;background:#f0f0f0"></div>
<div style="left:126.20px;top:81.50px;width:18.20px;height:18.20px;border-radius:50%;background:#f0f0f0"></div>
<span class="t" style="transform:scaleX(0.9000);left:133.35px;top:29.10px;font-size:7.8px;line-height:7.8px;color:#f0f0f0;-webkit-text-stroke:0.08px currentColor;">4</span>
<span class="t" style="transform:scaleX(0.9000);left:131.39px;top:66.50px;font-size:7.8px;line-height:7.8px;color:#f0f0f0;-webkit-text-stroke:0.08px currentColor;">30</span>
<div style="left:150.8px;top:0.8px;width:29px;height:36px;background:#555353"></div>
<div style="left:150.8px;top:38.6px;width:29px;height:36px;background:#555353"></div>
<div style="left:150.8px;top:76.4px;width:29px;height:36px;background:#555353"></div>
<div style="left:163.20px;top:13.30px;width:4.20px;height:4.20px;border-radius:50%;background:#f0f0f0"></div>
<div style="left:156.20px;top:44.00px;width:18.20px;height:18.20px;border-radius:50%;background:#f0f0f0"></div>
<div style="left:156.20px;top:81.50px;width:18.20px;height:18.20px;border-radius:50%;background:#f0f0f0"></div>
<span class="t" style="transform:scaleX(0.9000);left:163.35px;top:29.10px;font-size:7.8px;line-height:7.8px;color:#f0f0f0;-webkit-text-stroke:0.08px currentColor;">5</span>
<span class="t" style="transform:scaleX(0.9000);left:161.39px;top:66.50px;font-size:7.8px;line-height:7.8px;color:#f0f0f0;-webkit-text-stroke:0.08px currentColor;">40</span>
<div style="left:180.8px;top:0.8px;width:29px;height:36px;background:#555353"></div>
<div style="left:180.8px;top:38.6px;width:29px;height:36px;background:#555353"></div>
<div style="left:180.8px;top:76.4px;width:29px;height:36px;background:#555353"></div>
<div style="left:192.55px;top:12.65px;width:5.50px;height:5.50px;border-radius:50%;background:#f0f0f0"></div>
<div style="left:186.20px;top:44.00px;width:18.20px;height:18.20px;border-radius:50%;background:#f0f0f0"></div>
<div style="left:186.20px;top:81.50px;width:18.20px;height:18.20px;border-radius:50%;background:#f0f0f0"></div>
<span class="t" style="transform:scaleX(0.9000);left:193.35px;top:29.10px;font-size:7.8px;line-height:7.8px;color:#f0f0f0;-webkit-text-stroke:0.08px currentColor;">7</span>
<span class="t" style="transform:scaleX(0.9000);left:191.39px;top:66.50px;font-size:7.8px;line-height:7.8px;color:#f0f0f0;-webkit-text-stroke:0.08px currentColor;">50</span>
<div style="left:210.8px;top:0.8px;width:29px;height:36px;background:#555353"></div>
<div style="left:210.8px;top:38.6px;width:29px;height:36px;background:#555353"></div>
<div style="left:210.8px;top:76.4px;width:29px;height:36px;background:#555353"></div>
<div style="left:221.30px;top:11.40px;width:8.00px;height:8.00px;border-radius:50%;background:#f0f0f0"></div>
<div style="left:216.20px;top:44.00px;width:18.20px;height:18.20px;border-radius:50%;background:#f0f0f0"></div>
<div style="left:216.20px;top:81.50px;width:18.20px;height:18.20px;border-radius:50%;background:#f0f0f0"></div>
<span class="t" style="transform:scaleX(0.9000);left:221.39px;top:29.10px;font-size:7.8px;line-height:7.8px;color:#f0f0f0;-webkit-text-stroke:0.08px currentColor;">10</span>
<span class="t" style="transform:scaleX(0.9000);left:221.39px;top:66.50px;font-size:7.8px;line-height:7.8px;color:#f0f0f0;-webkit-text-stroke:0.08px currentColor;">70</span>
</div>
<div style="left:1009px;top:439.2px;width:15px;height:90.8px;background:#2b2b2b;"></div>
<div style="left:1010px;top:448.5px;width:12.6px;height:72px;background:#383636;background:linear-gradient(to right,#2c2a2a,#393737 40%,#393737 60%,#2c2a2a)"></div>
<div style="left:1010px;top:448.5px;width:12.6px;height:58.3px;background:#6b6969;border-radius:3.5px;background:linear-gradient(to right,#727070,#636161)"></div>
<svg style="left:1012px;top:441px;" width="9" height="6" viewBox="0 0 9 6"><path d="M0.8 5.2L4.2 0.6L7.6 5.2z" fill="#b4b4b4"/></svg>
<svg style="left:1012px;top:523px;" width="9" height="6" viewBox="0 0 9 6"><path d="M0.8 0.8L4.2 5.4L7.6 0.8z" fill="#b4b4b4"/></svg>
<div style="left:0px;top:529.8px;width:1024px;height:13.2px;background:#232323;"></div>
<span class="t" style="transform:scaleX(0.9711);left:5.00px;top:533.92px;font-size:8.6px;line-height:8.6px;color:#d6d6d6;">3543 * 2362 pixel</span>
<span class="t" style="transform:scaleX(1.0220);left:76.30px;top:533.92px;font-size:8.6px;line-height:8.6px;color:#d6d6d6;">(15 * 10cm)</span>
<span class="t" style="transform:scaleX(1.0176);left:128.30px;top:533.92px;font-size:8.6px;line-height:8.6px;color:#d6d6d6;">600 dpi</span>
<span class="t" style="transform:scaleX(0.9289);left:163.80px;top:533.92px;font-size:8.6px;line-height:8.6px;color:#d6d6d6;">66 %</span>
<span class="t" style="transform:scaleX(0.9380);left:189.30px;top:533.92px;font-size:8.6px;line-height:8.6px;color:#d6d6d6;">( 1313, 1423 )</span>
<span class="t" style="transform:scaleX(1.0368);left:247.00px;top:533.92px;font-size:8.6px;line-height:8.6px;color:#d6d6d6;">Vẽ một đường thẳng bằng cách giữ phím Shift, Thay đổi cỡ cọ bằng cách giữ phím Ctrl, Alt và kéo</span>
</body></html>
